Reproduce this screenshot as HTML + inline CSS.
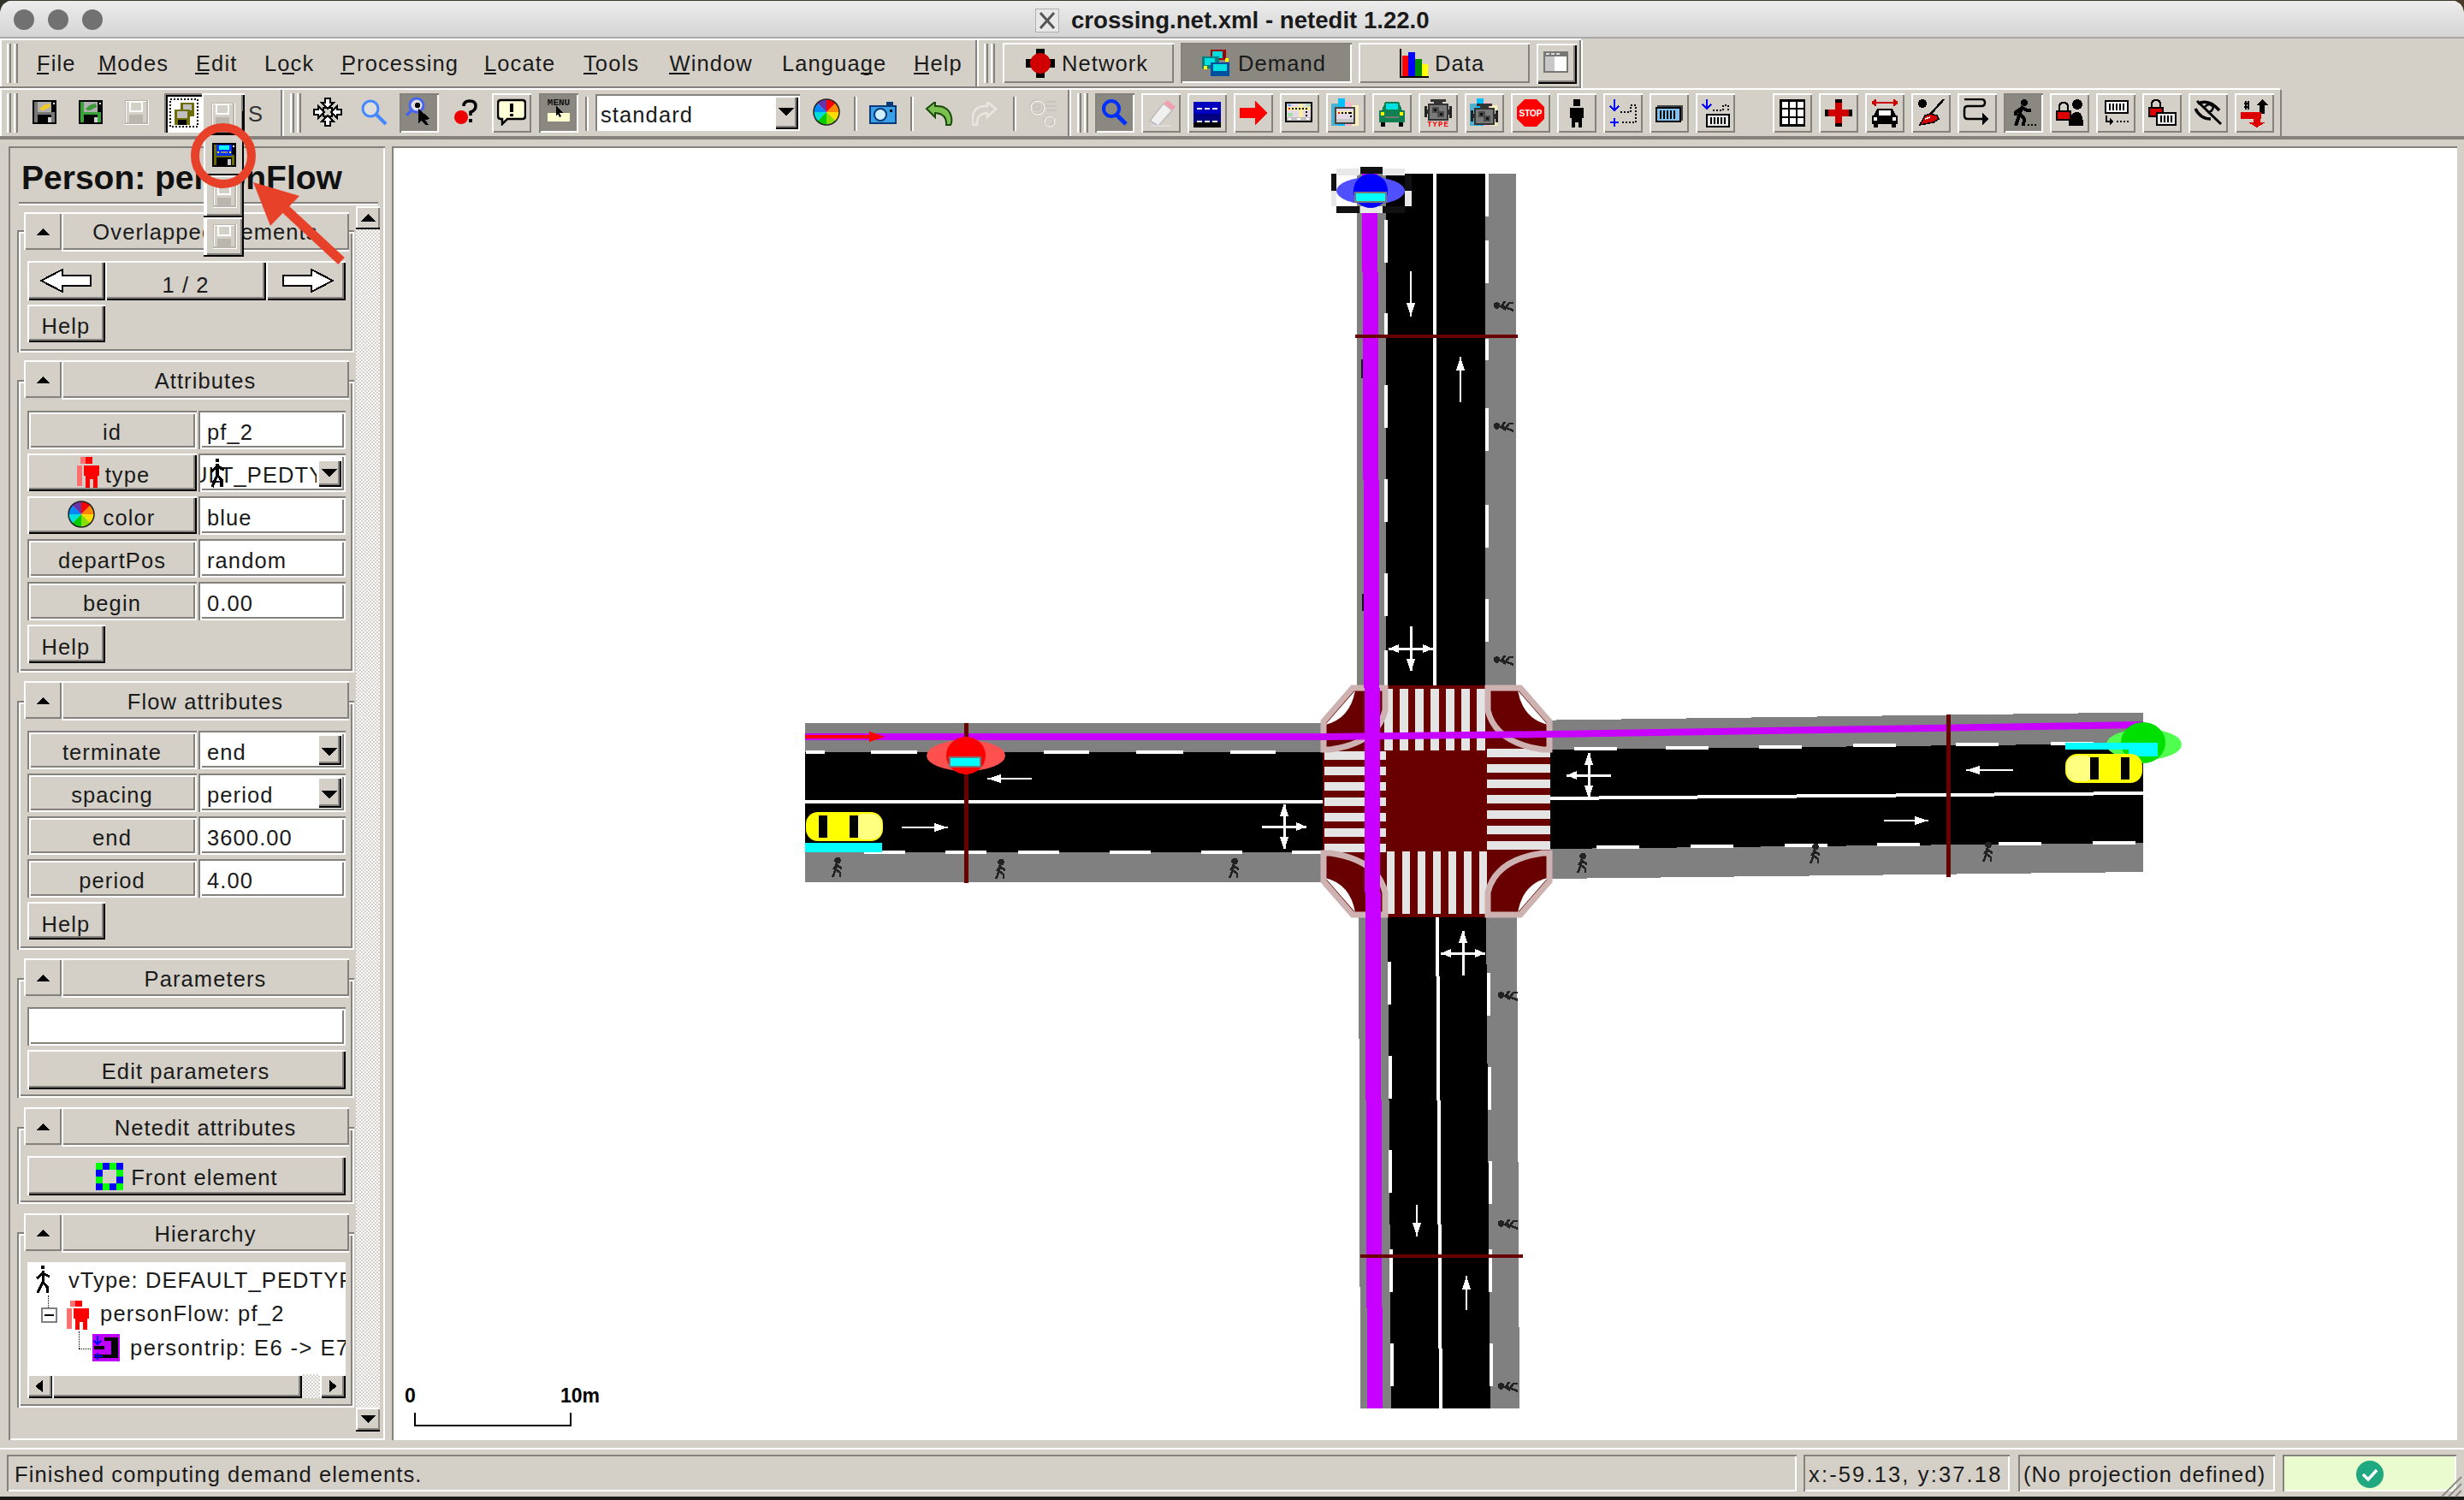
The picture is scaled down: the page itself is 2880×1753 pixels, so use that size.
<!DOCTYPE html><html><head><meta charset="utf-8"><style>
html,body{margin:0;padding:0;width:2880px;height:1753px;overflow:hidden;background:#d4d0c8;}
.a{position:absolute;box-sizing:border-box}
.t{position:absolute;white-space:pre;font-family:"Liberation Sans",sans-serif;line-height:normal}
</style></head><body>
<div class="a" style="left:0px;top:0px;width:2880px;height:44px;background:linear-gradient(#ededed,#d4d4d4)"></div>
<div class="a" style="left:0px;top:0px;width:2880px;height:1px;background:#3b3b33"></div>
<div class="a" style="left:0px;top:43px;width:2880px;height:2px;background:#a9a9a9"></div>
<div class="a" style="left:16px;top:11px;width:24px;height:24px;border-radius:50%;background:#717171"></div>
<div class="a" style="left:56px;top:11px;width:24px;height:24px;border-radius:50%;background:#717171"></div>
<div class="a" style="left:96px;top:11px;width:24px;height:24px;border-radius:50%;background:#717171"></div>
<div class="a" style="left:1210px;top:10px;width:28px;height:28px;background:#e8e8e8;border:1px solid #b0b0b0"></div>
<svg class="a" style="left:1210px;top:10px" width="28" height="28" viewBox="0 0 28 28" shape-rendering="crispEdges"><path d="M6 5 L22 23 M22 5 L6 23" stroke="#555" stroke-width="3" fill="none" shape-rendering="auto"/></svg>
<div class="t" style="left:1252px;top:8.1px;font-size:27.6px;font-weight:bold;color:#1a1a1a;letter-spacing:0px;">crossing.net.xml - netedit 1.22.0</div>
<svg class="a" style="left:0px;top:0px" width="16" height="16" viewBox="0 0 16 16" shape-rendering="crispEdges"><path d="M0 0 H14 Q2 2 0 14 Z" fill="#2f3328" shape-rendering="auto"/></svg>
<svg class="a" style="left:2864px;top:0px" width="16" height="16" viewBox="0 0 16 16" shape-rendering="crispEdges"><path d="M16 0 H2 Q14 2 16 14 Z" fill="#4a3a2a" shape-rendering="auto"/></svg>
<div class="a" style="left:0px;top:45px;width:1848px;height:2px;background:#fff"></div>
<div class="a" style="left:0px;top:101px;width:1848px;height:2px;background:#85827d"></div>
<div class="a" style="left:0px;top:103px;width:2880px;height:2px;background:#fff"></div>
<div class="a" style="left:0px;top:47px;width:2px;height:54px;background:#fff"></div>
<div class="a" style="left:8px;top:51px;width:5px;height:46px;border-left:2px solid #ffffff;border-right:2px solid #85827d;box-sizing:border-box"></div>
<div class="a" style="left:16px;top:51px;width:5px;height:46px;border-left:2px solid #ffffff;border-right:2px solid #85827d;box-sizing:border-box"></div>
<div class="t" style="left:43px;top:59.5px;font-size:25.5px;font-weight:normal;color:#1a1a1a;letter-spacing:1.1px;">File</div>
<div class="t" style="left:115px;top:59.5px;font-size:25.5px;font-weight:normal;color:#1a1a1a;letter-spacing:1.1px;">Modes</div>
<div class="t" style="left:229px;top:59.5px;font-size:25.5px;font-weight:normal;color:#1a1a1a;letter-spacing:1.1px;">Edit</div>
<div class="t" style="left:309px;top:59.5px;font-size:25.5px;font-weight:normal;color:#1a1a1a;letter-spacing:1.1px;">Lock</div>
<div class="t" style="left:399px;top:59.5px;font-size:25.5px;font-weight:normal;color:#1a1a1a;letter-spacing:1.1px;">Processing</div>
<div class="t" style="left:566px;top:59.5px;font-size:25.5px;font-weight:normal;color:#1a1a1a;letter-spacing:1.1px;">Locate</div>
<div class="t" style="left:682px;top:59.5px;font-size:25.5px;font-weight:normal;color:#1a1a1a;letter-spacing:1.1px;">Tools</div>
<div class="t" style="left:782.5px;top:59.5px;font-size:25.5px;font-weight:normal;color:#1a1a1a;letter-spacing:1.1px;">Window</div>
<div class="t" style="left:914px;top:59.5px;font-size:25.5px;font-weight:normal;color:#1a1a1a;letter-spacing:1.1px;">Language</div>
<div class="t" style="left:1068px;top:59.5px;font-size:25.5px;font-weight:normal;color:#1a1a1a;letter-spacing:1.1px;">Help</div>
<div class="a" style="left:43px;top:85px;width:14px;height:2px;background:#111"></div>
<div class="a" style="left:114px;top:85px;width:22px;height:2px;background:#111"></div>
<div class="a" style="left:228px;top:85px;width:16px;height:2px;background:#111"></div>
<div class="a" style="left:330px;top:85px;width:14px;height:2px;background:#111"></div>
<div class="a" style="left:398px;top:85px;width:16px;height:2px;background:#111"></div>
<div class="a" style="left:566px;top:85px;width:14px;height:2px;background:#111"></div>
<div class="a" style="left:682px;top:85px;width:16px;height:2px;background:#111"></div>
<div class="a" style="left:782px;top:85px;width:24px;height:2px;background:#111"></div>
<div class="a" style="left:1006px;top:85px;width:14px;height:2px;background:#111"></div>
<div class="a" style="left:1068px;top:85px;width:18px;height:2px;background:#111"></div>
<div class="a" style="left:1140px;top:47px;width:2px;height:54px;background:#85827d"></div>
<div class="a" style="left:1142px;top:47px;width:2px;height:54px;background:#fff"></div>
<div class="a" style="left:1150px;top:51px;width:5px;height:46px;border-left:2px solid #ffffff;border-right:2px solid #85827d;box-sizing:border-box"></div>
<div class="a" style="left:1158px;top:51px;width:5px;height:46px;border-left:2px solid #ffffff;border-right:2px solid #85827d;box-sizing:border-box"></div>
<div class="a" style="left:1172px;top:50px;width:200px;height:47px;background:#d4d0c8;box-shadow:inset 2px 2px 0 #ffffff,inset -2px -2px 0 #85827d"></div>
<div class="a" style="left:1380px;top:50px;width:200px;height:47px;background:#8b8881;box-shadow:inset 2px 2px 0 #85827d,inset -2px -2px 0 #ffffff"></div>
<div class="a" style="left:1588px;top:50px;width:200px;height:47px;background:#d4d0c8;box-shadow:inset 2px 2px 0 #ffffff,inset -2px -2px 0 #85827d"></div>
<div class="a" style="left:1796px;top:51px;width:47px;height:47px;background:#d4d0c8;box-shadow:inset 2px 2px 0 #ffffff,inset -2px -2px 0 #000000,inset -4px -4px 0 #85827d"></div>
<div class="a" style="left:1846px;top:47px;width:2px;height:56px;background:#85827d"></div>
<div class="a" style="left:1848px;top:47px;width:2px;height:56px;background:#fff"></div>
<div class="t" style="left:1241px;top:59.5px;font-size:25.5px;font-weight:normal;color:#1a1a1a;letter-spacing:1.1px;">Network</div>
<div class="t" style="left:1447px;top:59.5px;font-size:25.5px;font-weight:normal;color:#1a1a1a;letter-spacing:1.1px;">Demand</div>
<div class="t" style="left:1677px;top:59.5px;font-size:25.5px;font-weight:normal;color:#1a1a1a;letter-spacing:1.1px;">Data</div>
<svg class="a" style="left:1199px;top:57px" width="34" height="34" viewBox="0 0 34 34" shape-rendering="crispEdges"><rect x="12" y="0" width="10" height="34" fill="#000"/><rect x="0" y="12" width="34" height="10" fill="#000"/><circle cx="17" cy="17" r="12" fill="#d00000" shape-rendering="auto"/></svg>
<svg class="a" style="left:1405px;top:57px" width="34" height="34" viewBox="0 0 34 34" shape-rendering="crispEdges"><rect x="10" y="1" width="18" height="12" fill="#a00000"/><rect x="12" y="3" width="12" height="8" fill="#00dede"/><rect x="0" y="9" width="20" height="14" fill="#008080"/><rect x="3" y="11" width="12" height="8" fill="#00e0e0"/><rect x="10" y="16" width="22" height="16" fill="#0050a0"/><rect x="13" y="18" width="16" height="8" fill="#00e0e0"/><rect x="2" y="20" width="4" height="4" fill="#ff0"/><rect x="27" y="11" width="4" height="4" fill="#ff0"/></svg>
<svg class="a" style="left:1636px;top:57px" width="34" height="34" viewBox="0 0 34 34" shape-rendering="crispEdges"><rect x="0" y="0" width="2" height="34" fill="#000"/><rect x="0" y="32" width="34" height="2" fill="#000"/><rect x="3" y="8" width="7" height="24" fill="#f00"/><rect x="10" y="4" width="8" height="28" fill="#00f"/><rect x="18" y="12" width="8" height="20" fill="#080"/><rect x="26" y="18" width="7" height="14" fill="#ff0"/></svg>
<svg class="a" style="left:1804px;top:60px" width="29" height="25" viewBox="0 0 29 25" shape-rendering="crispEdges"><rect x="0" y="0" width="29" height="25" fill="#777"/><rect x="2" y="6" width="11" height="17" fill="#c8c8c8"/><rect x="13" y="6" width="14" height="17" fill="#fff"/><rect x="3" y="2" width="4" height="2" fill="#ddd"/><rect x="9" y="2" width="4" height="2" fill="#ddd"/><rect x="15" y="2" width="4" height="2" fill="#ddd"/></svg>
<div class="a" style="left:0px;top:159px;width:2880px;height:4px;background:#85827d"></div>
<div class="a" style="left:0px;top:105px;width:2px;height:54px;background:#fff"></div>
<div class="a" style="left:2665px;top:103px;width:215px;height:2px;background:#d4d0c8"></div>
<div class="a" style="left:8px;top:109px;width:5px;height:46px;border-left:2px solid #ffffff;border-right:2px solid #85827d;box-sizing:border-box"></div>
<div class="a" style="left:16px;top:109px;width:5px;height:46px;border-left:2px solid #ffffff;border-right:2px solid #85827d;box-sizing:border-box"></div>
<svg class="a" style="left:38px;top:117px" width="28" height="28" viewBox="0 0 28 28" shape-rendering="crispEdges"><rect x="0" y="0" width="28" height="28" fill="#000"/><rect x="2" y="2" width="4" height="24" fill="#777"/><rect x="22" y="14" width="4" height="12" fill="#777"/><rect x="6" y="2" width="16" height="12" fill="#b0b0b0"/><rect x="2" y="14" width="24" height="3" fill="#777"/><rect x="18" y="20" width="4" height="6" fill="#d0d0d0"/><rect x="24" y="3" width="2" height="2" fill="#fff"/><path d="M7 11 L12 6 L20 4 L21 8 L13 12 Z" fill="#f0c830"/></svg>
<svg class="a" style="left:92px;top:117px" width="28" height="28" viewBox="0 0 28 28" shape-rendering="crispEdges"><rect x="0" y="0" width="28" height="28" fill="#000"/><rect x="2" y="2" width="4" height="24" fill="#3aa03a"/><rect x="22" y="14" width="4" height="12" fill="#3aa03a"/><rect x="6" y="2" width="16" height="12" fill="#b0b0b0"/><rect x="2" y="14" width="24" height="3" fill="#3aa03a"/><rect x="18" y="20" width="4" height="6" fill="#d0d0d0"/><rect x="24" y="3" width="2" height="2" fill="#fff"/><path d="M7 11 L12 6 L20 4 L21 8 L13 12 Z" fill="#3a9a3a"/></svg>
<svg class="a" style="left:146px;top:117px" width="30" height="30" viewBox="0 0 30 30" shape-rendering="crispEdges"><rect x="1" y="1" width="26" height="27" fill="none" stroke="#fff" stroke-width="2"/><rect x="0" y="0" width="26" height="27" fill="none" stroke="#bab6ae" stroke-width="2"/><rect x="6" y="2" width="14" height="11" fill="none" stroke="#fff" stroke-width="2"/><rect x="5" y="17" width="16" height="9" fill="#bab6ae"/></svg>
<div class="a" style="left:192px;top:109px;width:44px;height:46px;background:#fff;box-shadow:inset 2px 2px 0 #85827d,inset 4px 4px 0 #000"></div>
<svg class="a" style="left:198px;top:115px" width="34" height="34" viewBox="0 0 34 34" shape-rendering="crispEdges"><rect x="1" y="1" width="32" height="32" fill="none" stroke="#000" stroke-width="2" stroke-dasharray="2 2"/><rect x="13" y="5" width="16" height="16" fill="#6e6e00"/><rect x="16" y="7" width="10" height="7" fill="#c0c0c0"/><rect x="6" y="13" width="18" height="18" fill="#6e6e00"/><rect x="9" y="15" width="12" height="8" fill="#c0c0c0"/><rect x="10" y="25" width="10" height="6" fill="#000"/></svg>
<div class="a" style="left:236px;top:109px;width:50px;height:46px;background:#d4d0c8;box-shadow:inset 2px 2px 0 #fff,inset -2px 0 0 #000,inset -4px -2px 0 #85827d"></div>
<svg class="a" style="left:247px;top:120px" width="30" height="30" viewBox="0 0 30 30" shape-rendering="crispEdges"><rect x="1" y="1" width="26" height="27" fill="none" stroke="#fff" stroke-width="2"/><rect x="0" y="0" width="26" height="27" fill="none" stroke="#bab6ae" stroke-width="2"/><rect x="6" y="2" width="14" height="11" fill="none" stroke="#fff" stroke-width="2"/><rect x="5" y="17" width="16" height="9" fill="#bab6ae"/></svg>
<div class="t" style="left:290px;top:119.0px;font-size:25.5px;font-weight:normal;color:#333;letter-spacing:1.1px;">S</div>
<div class="a" style="left:328px;top:105px;width:2px;height:54px;background:#85827d"></div>
<div class="a" style="left:330px;top:105px;width:2px;height:54px;background:#fff"></div>
<div class="a" style="left:339px;top:109px;width:5px;height:46px;border-left:2px solid #ffffff;border-right:2px solid #85827d;box-sizing:border-box"></div>
<div class="a" style="left:347px;top:109px;width:5px;height:46px;border-left:2px solid #ffffff;border-right:2px solid #85827d;box-sizing:border-box"></div>
<svg class="a" style="left:366px;top:114px" width="34" height="34" viewBox="0 0 34 34" shape-rendering="crispEdges"><rect x="12" y="12" width="10" height="10" fill="none" stroke="#000" stroke-width="2"/><g transform="rotate(0 17 17)"><path d="M14 1 H20 V6 H24 L17 13 L10 6 H14 Z" fill="#fff" stroke="#000" stroke-width="2.2" stroke-linejoin="miter"/></g><g transform="rotate(90 17 17)"><path d="M14 1 H20 V6 H24 L17 13 L10 6 H14 Z" fill="#fff" stroke="#000" stroke-width="2.2" stroke-linejoin="miter"/></g><g transform="rotate(180 17 17)"><path d="M14 1 H20 V6 H24 L17 13 L10 6 H14 Z" fill="#fff" stroke="#000" stroke-width="2.2" stroke-linejoin="miter"/></g><g transform="rotate(270 17 17)"><path d="M14 1 H20 V6 H24 L17 13 L10 6 H14 Z" fill="#fff" stroke="#000" stroke-width="2.2" stroke-linejoin="miter"/></g></svg>
<svg class="a" style="left:421px;top:115px" width="32" height="32" viewBox="0 0 32 32" shape-rendering="crispEdges"><circle cx="12" cy="12" r="9" fill="#ddd" stroke="#4488ff" stroke-width="3" shape-rendering="auto"/><path d="M18 18 L30 30" stroke="#4488ff" stroke-width="4" shape-rendering="auto"/></svg>
<div class="a" style="left:467px;top:109px;width:46px;height:46px;background:#8b8881;box-shadow:inset 2px 2px 0 #85827d,inset -2px -2px 0 #ffffff"></div>
<svg class="a" style="left:473px;top:113px" width="34" height="34" viewBox="0 0 34 34" shape-rendering="crispEdges"><circle cx="14" cy="10" r="8" fill="#ddd" stroke="#4466ee" stroke-width="3" shape-rendering="auto"/><circle cx="15" cy="10" r="3" fill="#000"/><path d="M8 16 L2 22" stroke="#4466ee" stroke-width="3"/><path d="M16 14 L30 26 L24 27 L28 33 L24 33 L20 28 L16 31 Z" fill="#000"/></svg>
<svg class="a" style="left:530px;top:116px" width="30" height="30" viewBox="0 0 30 30" shape-rendering="crispEdges"><circle cx="9" cy="21" r="8" fill="#e00" shape-rendering="auto"/><path d="M12 8 Q12 2 19 2 Q26 2 26 8 Q26 13 20 15 V19" stroke="#000" stroke-width="3.5" fill="none" shape-rendering="auto"/><rect x="18" y="23" width="4" height="4" fill="#000"/></svg>
<div class="a" style="left:575px;top:109px;width:46px;height:46px;background:#d4d0c8;box-shadow:inset 2px 2px 0 #ffffff,inset -2px -2px 0 #85827d"></div>
<svg class="a" style="left:581px;top:115px" width="34" height="32" viewBox="0 0 34 32" shape-rendering="crispEdges"><path d="M4 2 H30 Q33 2 33 6 V20 Q33 24 30 24 H12 L6 30 V24 H4 Q1 24 1 20 V6 Q1 2 4 2 Z" fill="#ffffd8" stroke="#000" stroke-width="2.5" shape-rendering="auto"/><rect x="15" y="6" width="4" height="10" fill="#000"/><rect x="15" y="18" width="4" height="3" fill="#000"/></svg>
<div class="a" style="left:630px;top:109px;width:46px;height:46px;background:#8b8881;box-shadow:inset 2px 2px 0 #85827d,inset -2px -2px 0 #ffffff"></div>
<svg class="a" style="left:636px;top:112px" width="34" height="36" viewBox="0 0 34 36" shape-rendering="crispEdges"><text x="17" y="11" font-family="Liberation Mono" font-size="11" font-weight="bold" text-anchor="middle" fill="#111">MENU</text><rect x="4" y="20" width="26" height="10" fill="#ffffd0"/><path d="M14 12 L22 20 L18 20 L20 24 L18 25 L16 21 L14 23 Z" fill="#000"/></svg>
<div class="a" style="left:684px;top:113px;width:2px;height:40px;background:#85827d"></div>
<div class="a" style="left:686px;top:113px;width:2px;height:40px;background:#fff"></div>
<div class="a" style="left:696px;top:110px;width:239px;height:43px;background:#fff;box-shadow:inset 2px 2px 0 #85827d,inset -2px -2px 0 #fff"></div>
<div class="t" style="left:702px;top:119.5px;font-size:25.5px;font-weight:normal;color:#1a1a1a;letter-spacing:1.1px;">standard</div>
<div class="a" style="left:905px;top:112px;width:28px;height:39px;background:#d4d0c8;box-shadow:inset 2px 2px 0 #ffffff,inset -2px -2px 0 #000000,inset -4px -4px 0 #85827d"></div>
<svg class="a" style="left:910px;top:126px" width="18" height="10" viewBox="0 0 18 10" shape-rendering="crispEdges"><path d="M0 0 H18 L9 10 Z" fill="#000"/></svg>
<svg class="a" style="left:950px;top:115px" width="32" height="32" viewBox="0 0 32 32" shape-rendering="crispEdges"><g shape-rendering="auto" transform="translate(16 16)"><path d="M0 0 L0 -15 A15 15 0 0 1 10.6 -10.6 Z" fill="#f00"/><path d="M0 0 L10.6 -10.6 A15 15 0 0 1 15 0 Z" fill="#f80"/><path d="M0 0 L15 0 A15 15 0 0 1 10.6 10.6 Z" fill="#fd0"/><path d="M0 0 L10.6 10.6 A15 15 0 0 1 0 15 Z" fill="#8d0"/><path d="M0 0 L0 15 A15 15 0 0 1 -10.6 10.6 Z" fill="#0c0"/><path d="M0 0 L-10.6 10.6 A15 15 0 0 1 -15 0 Z" fill="#0dd"/><path d="M0 0 L-15 0 A15 15 0 0 1 -10.6 -10.6 Z" fill="#08f"/><path d="M0 0 L-10.6 -10.6 A15 15 0 0 1 0 -15 Z" fill="#63a"/><circle r="15" fill="none" stroke="#222" stroke-width="1.5"/></g></svg>
<div class="a" style="left:998px;top:113px;width:2px;height:40px;background:#85827d"></div>
<div class="a" style="left:1000px;top:113px;width:2px;height:40px;background:#fff"></div>
<svg class="a" style="left:1016px;top:119px" width="32" height="26" viewBox="0 0 32 26" shape-rendering="crispEdges"><rect x="0" y="4" width="32" height="22" fill="#0a3a7a"/><rect x="2" y="6" width="28" height="18" fill="#3aa0e8"/><rect x="20" y="0" width="8" height="5" fill="#0a3a7a"/><circle cx="13" cy="15" r="7" fill="#cfefff" stroke="#0a3a7a" stroke-width="2" shape-rendering="auto"/><rect x="24" y="9" width="3" height="3" fill="#000"/></svg>
<div class="a" style="left:1064px;top:113px;width:2px;height:40px;background:#85827d"></div>
<div class="a" style="left:1066px;top:113px;width:2px;height:40px;background:#fff"></div>
<svg class="a" style="left:1081px;top:119px" width="34" height="28" viewBox="0 0 34 28" shape-rendering="crispEdges"><path d="M2 8 L12 0 V5 Q28 4 31 18 Q32 24 30 27 L25 27 Q26 14 12 13 V18 Z" fill="#7cc050" stroke="#1a4a10" stroke-width="2" shape-rendering="auto"/></svg>
<svg class="a" style="left:1136px;top:119px" width="30" height="28" viewBox="0 0 30 28" shape-rendering="crispEdges"><path d="M28 8 L18 0 V5 Q2 4 1 18 Q0 24 2 27 L6 27 Q5 14 18 13 V18 Z" fill="none" stroke="#e8e6e0" stroke-width="2.5" shape-rendering="auto"/></svg>
<div class="a" style="left:1184px;top:113px;width:2px;height:40px;background:#85827d"></div>
<div class="a" style="left:1186px;top:113px;width:2px;height:40px;background:#fff"></div>
<svg class="a" style="left:1202px;top:115px" width="34" height="34" viewBox="0 0 34 34" shape-rendering="crispEdges"><g fill="none" stroke="#c8c4bc" stroke-width="2" shape-rendering="auto"><circle cx="10" cy="10" r="8"/><circle cx="10" cy="10" r="3"/><circle cx="24" cy="26" r="6"/><path d="M20 4 H33 M20 9 H33 M22 14 H33"/></g><g fill="none" stroke="#fff" stroke-width="1" shape-rendering="auto"><circle cx="11" cy="11" r="8"/><circle cx="25" cy="27" r="6"/></g></svg>
<div class="a" style="left:1248px;top:105px;width:2px;height:54px;background:#85827d"></div>
<div class="a" style="left:1250px;top:105px;width:2px;height:54px;background:#fff"></div>
<div class="a" style="left:1259px;top:109px;width:5px;height:46px;border-left:2px solid #ffffff;border-right:2px solid #85827d;box-sizing:border-box"></div>
<div class="a" style="left:1267px;top:109px;width:5px;height:46px;border-left:2px solid #ffffff;border-right:2px solid #85827d;box-sizing:border-box"></div>
<div class="a" style="left:1280px;top:109px;width:46px;height:46px;background:#8b8881;box-shadow:inset 2px 2px 0 #85827d,inset -2px -2px 0 #ffffff"></div>
<svg class="a" style="left:1286px;top:115px" width="34" height="34" viewBox="0 0 34 34" shape-rendering="crispEdges"><circle cx="13" cy="12" r="9" fill="none" stroke="#0030ff" stroke-width="4" shape-rendering="auto"/><path d="M19 19 L30 30" stroke="#0030ff" stroke-width="5" shape-rendering="auto"/></svg>
<div class="a" style="left:1334px;top:109px;width:46px;height:46px;background:#d4d0c8;box-shadow:inset 2px 2px 0 #ffffff,inset -2px -2px 0 #85827d"></div>
<svg class="a" style="left:1340px;top:115px" width="34" height="34" viewBox="0 0 34 34" shape-rendering="crispEdges"><path d="M4 26 L20 6 L30 14 L14 32 Z" fill="#f0f0f0" stroke="#bbb" stroke-width="1.5" shape-rendering="auto"/><path d="M20 6 L25 2 L34 10 L30 14 Z" fill="#f0a0b0" shape-rendering="auto"/><path d="M6 32 H28" stroke="#ddd" stroke-width="2"/></svg>
<div class="a" style="left:1388px;top:109px;width:46px;height:46px;background:#d4d0c8;box-shadow:inset 2px 2px 0 #ffffff,inset -2px -2px 0 #85827d"></div>
<svg class="a" style="left:1394px;top:115px" width="34" height="34" viewBox="0 0 34 34" shape-rendering="crispEdges"><rect x="1" y="4" width="32" height="14" fill="#0000c0"/><rect x="1" y="18" width="32" height="10" fill="#000080"/><rect x="1" y="28" width="32" height="6" fill="#000"/><rect x="5" y="11" width="6" height="2" fill="#fff"/><rect x="14" y="11" width="6" height="2" fill="#fff"/><rect x="23" y="11" width="6" height="2" fill="#fff"/><rect x="5" y="26" width="6" height="2" fill="#fff"/><rect x="14" y="26" width="6" height="2" fill="#fff"/><rect x="23" y="26" width="6" height="2" fill="#fff"/></svg>
<div class="a" style="left:1442px;top:109px;width:46px;height:46px;background:#d4d0c8;box-shadow:inset 2px 2px 0 #ffffff,inset -2px -2px 0 #85827d"></div>
<svg class="a" style="left:1448px;top:115px" width="34" height="34" viewBox="0 0 34 34" shape-rendering="crispEdges"><path d="M1 11 H19 V2 L33 17 L19 32 V23 H1 Z" fill="#f00"/></svg>
<div class="a" style="left:1496px;top:109px;width:46px;height:46px;background:#d4d0c8;box-shadow:inset 2px 2px 0 #ffffff,inset -2px -2px 0 #85827d"></div>
<svg class="a" style="left:1502px;top:115px" width="34" height="34" viewBox="0 0 34 34" shape-rendering="crispEdges"><rect x="0" y="4" width="32" height="24" fill="#000"/><rect x="2" y="6" width="28" height="20" fill="#e6d8e6"/><rect x="16" y="6" width="5" height="20" fill="#f8f0a0"/><rect x="2" y="10" width="28" height="4" fill="#f8f0a0"/><rect x="3" y="7" width="4" height="2" fill="#60a0f0"/><rect x="25" y="7" width="5" height="2" fill="#a0e0a0"/><rect x="3" y="17" width="6" height="4" fill="#a0e0a0"/><rect x="2" y="22" width="28" height="4" fill="#c0c0c0"/><rect x="4" y="23" width="3" height="2" fill="#fff"/><rect x="14" y="23" width="4" height="2" fill="#fff"/><rect x="25" y="23" width="3" height="2" fill="#fff"/><rect x="4" y="11" width="2" height="2" fill="#f00"/><rect x="8" y="11" width="2" height="2" fill="#000"/><rect x="12" y="11" width="2" height="2" fill="#000"/><rect x="16" y="11" width="2" height="2" fill="#000"/><rect x="20" y="11" width="2" height="2" fill="#000"/><rect x="24" y="11" width="2" height="2" fill="#000"/><rect x="24" y="15" width="2" height="2" fill="#000"/><rect x="24" y="19" width="2" height="2" fill="#000"/></svg>
<div class="a" style="left:1550px;top:109px;width:46px;height:46px;background:#d4d0c8;box-shadow:inset 2px 2px 0 #ffffff,inset -2px -2px 0 #85827d"></div>
<svg class="a" style="left:1556px;top:115px" width="34" height="34" viewBox="0 0 34 34" shape-rendering="crispEdges"><rect x="8" y="0" width="8" height="12" fill="#00c0ff"/><rect x="0" y="6" width="8" height="26" fill="#50b0d0"/><rect x="16" y="4" width="8" height="28" fill="#ffb8c8"/><rect x="24" y="8" width="8" height="24" fill="#f8f0c0"/><rect x="8" y="12" width="8" height="20" fill="#00c0ff"/><rect x="4" y="10" width="24" height="20" fill="#444"/><rect x="6" y="12" width="20" height="16" fill="#e6d8e6"/><rect x="6" y="15" width="20" height="3" fill="#f8f0a0"/><rect x="6" y="24" width="20" height="4" fill="#c8c8c8"/><rect x="8" y="16" width="2" height="2" fill="#f00"/><rect x="12" y="16" width="2" height="2" fill="#000"/><rect x="16" y="16" width="2" height="2" fill="#000"/><rect x="20" y="16" width="4" height="2" fill="#000"/><rect x="22" y="20" width="2" height="2" fill="#000"/></svg>
<div class="a" style="left:1604px;top:109px;width:46px;height:46px;background:#d4d0c8;box-shadow:inset 2px 2px 0 #ffffff,inset -2px -2px 0 #85827d"></div>
<svg class="a" style="left:1610px;top:115px" width="34" height="34" viewBox="0 0 34 34" shape-rendering="crispEdges"><path d="M5 14 L9 4 H25 L29 14 H32 V28 H2 V14 Z" fill="#108050"/><rect x="10" y="6" width="14" height="7" fill="#00e0e0"/><rect x="4" y="16" width="4" height="4" fill="#ff0"/><rect x="26" y="16" width="4" height="4" fill="#ff0"/><rect x="9" y="21" width="16" height="2" fill="#777"/><rect x="4" y="28" width="5" height="5" fill="#000"/><rect x="25" y="28" width="5" height="5" fill="#000"/></svg>
<div class="a" style="left:1658px;top:109px;width:46px;height:46px;background:#d4d0c8;box-shadow:inset 2px 2px 0 #ffffff,inset -2px -2px 0 #85827d"></div>
<svg class="a" style="left:1664px;top:115px" width="34" height="34" viewBox="0 0 34 34" shape-rendering="crispEdges"><g transform="translate(1 1)"><rect x="7" y="0" width="18" height="3" fill="#333"/><rect x="11" y="3" width="10" height="3" fill="#333"/><rect x="5" y="6" width="22" height="18" fill="#7a7a7a" stroke="#333" stroke-width="2"/><rect x="0" y="8" width="3" height="13" fill="#222"/><rect x="3" y="12" width="3" height="5" fill="#333"/><rect x="29" y="8" width="3" height="14" fill="#222"/><rect x="26" y="12" width="3" height="6" fill="#333"/><rect x="9" y="9" width="8" height="7" fill="#4a4a4a"/><rect x="15" y="14" width="8" height="7" fill="#4a4a4a"/><rect x="11" y="11" width="3" height="3" fill="#111"/><rect x="18" y="16" width="3" height="3" fill="#111"/></g><text x="17" y="33" font-family="Liberation Mono" font-size="9" font-weight="bold" text-anchor="middle" fill="#e00" letter-spacing="1">TYPE</text></svg>
<div class="a" style="left:1712px;top:109px;width:46px;height:46px;background:#d4d0c8;box-shadow:inset 2px 2px 0 #ffffff,inset -2px -2px 0 #85827d"></div>
<svg class="a" style="left:1718px;top:115px" width="34" height="34" viewBox="0 0 34 34" shape-rendering="crispEdges"><rect x="8" y="0" width="8" height="32" fill="#00c0ff"/><rect x="0" y="6" width="8" height="26" fill="#50b0d0"/><rect x="16" y="4" width="8" height="28" fill="#ffb8c8"/><rect x="24" y="8" width="8" height="24" fill="#f8f0c0"/><g transform="translate(1 6)"><rect x="7" y="0" width="18" height="3" fill="#333"/><rect x="11" y="3" width="10" height="3" fill="#333"/><rect x="5" y="6" width="22" height="18" fill="#7a7a7a" stroke="#333" stroke-width="2"/><rect x="0" y="8" width="3" height="13" fill="#222"/><rect x="3" y="12" width="3" height="5" fill="#333"/><rect x="29" y="8" width="3" height="14" fill="#222"/><rect x="26" y="12" width="3" height="6" fill="#333"/><rect x="9" y="9" width="8" height="7" fill="#4a4a4a"/><rect x="15" y="14" width="8" height="7" fill="#4a4a4a"/><rect x="11" y="11" width="3" height="3" fill="#111"/><rect x="18" y="16" width="3" height="3" fill="#111"/></g></svg>
<div class="a" style="left:1766px;top:109px;width:46px;height:46px;background:#d4d0c8;box-shadow:inset 2px 2px 0 #ffffff,inset -2px -2px 0 #85827d"></div>
<svg class="a" style="left:1772px;top:115px" width="34" height="34" viewBox="0 0 34 34" shape-rendering="crispEdges"><path d="M10 1 H24 L33 10 V24 L24 33 H10 L1 24 V10 Z" fill="#f00" shape-rendering="auto"/><text x="17" y="21" font-family="Liberation Sans" font-size="10" font-weight="bold" text-anchor="middle" fill="#fff">STOP</text></svg>
<div class="a" style="left:1820px;top:109px;width:46px;height:46px;background:#d4d0c8;box-shadow:inset 2px 2px 0 #ffffff,inset -2px -2px 0 #85827d"></div>
<svg class="a" style="left:1826px;top:115px" width="34" height="34" viewBox="0 0 34 34" shape-rendering="crispEdges"><rect x="13" y="1" width="8" height="8" fill="#000"/><rect x="9" y="11" width="16" height="12" fill="#000"/><rect x="11" y="23" width="12" height="5" fill="#000"/><rect x="11" y="28" width="4" height="6" fill="#000"/><rect x="19" y="28" width="4" height="6" fill="#000"/></svg>
<div class="a" style="left:1874px;top:109px;width:46px;height:46px;background:#d4d0c8;box-shadow:inset 2px 2px 0 #ffffff,inset -2px -2px 0 #85827d"></div>
<svg class="a" style="left:1880px;top:115px" width="34" height="34" viewBox="0 0 34 34" shape-rendering="crispEdges"><path d="M7 1 V14 M2 9 L7 14 L12 9" stroke="#00f" stroke-width="2.5" fill="none"/><path d="M2 28 L12 28 M7 23 V33" stroke="#00f" stroke-width="2.5"/><path d="M14 16 H26 V8 H32 V28 H14" stroke="#000" stroke-width="2" stroke-dasharray="2 2" fill="none"/></svg>
<div class="a" style="left:1928px;top:109px;width:46px;height:46px;background:#d4d0c8;box-shadow:inset 2px 2px 0 #ffffff,inset -2px -2px 0 #85827d"></div>
<svg class="a" style="left:1934px;top:115px" width="34" height="34" viewBox="0 0 34 34" shape-rendering="crispEdges"><rect x="3" y="8" width="30" height="18" fill="#444"/><rect x="1" y="10" width="30" height="18" fill="#000"/><rect x="3" y="12" width="26" height="14" fill="#80c0f0"/><path d="M7 14 V24 M11 14 V24 M15 14 V24 M19 14 V24 M23 14 V24" stroke="#000" stroke-width="2"/></svg>
<div class="a" style="left:1982px;top:109px;width:46px;height:46px;background:#d4d0c8;box-shadow:inset 2px 2px 0 #ffffff,inset -2px -2px 0 #85827d"></div>
<svg class="a" style="left:1988px;top:115px" width="34" height="34" viewBox="0 0 34 34" shape-rendering="crispEdges"><path d="M7 1 V12 M2 7 L7 12 L12 7" stroke="#00f" stroke-width="2.5" fill="none"/><path d="M14 14 H26 V8 H32 V14" stroke="#000" stroke-width="2" stroke-dasharray="2 2" fill="none"/><rect x="6" y="18" width="28" height="16" fill="#000"/><rect x="8" y="20" width="24" height="12" fill="#e8e8e8"/><path d="M12 22 V30 M16 22 V30 M20 22 V30 M24 22 V30 M28 22 V30" stroke="#000" stroke-width="2"/></svg>
<div class="a" style="left:2072px;top:109px;width:46px;height:46px;background:#d4d0c8;box-shadow:inset 2px 2px 0 #ffffff,inset -2px -2px 0 #85827d"></div>
<svg class="a" style="left:2078px;top:115px" width="34" height="34" viewBox="0 0 34 34" shape-rendering="crispEdges"><rect x="2" y="1" width="30" height="32" fill="#000"/><rect x="5" y="4" width="7" height="7" fill="#fff"/><rect x="14" y="4" width="7" height="7" fill="#fff"/><rect x="23" y="4" width="7" height="7" fill="#fff"/><rect x="5" y="13" width="7" height="8" fill="#fff"/><rect x="14" y="13" width="7" height="8" fill="#fff"/><rect x="23" y="13" width="7" height="8" fill="#fff"/><rect x="5" y="23" width="7" height="7" fill="#fff"/><rect x="14" y="23" width="7" height="7" fill="#fff"/><rect x="23" y="23" width="7" height="7" fill="#fff"/></svg>
<div class="a" style="left:2126px;top:109px;width:46px;height:46px;background:#d4d0c8;box-shadow:inset 2px 2px 0 #ffffff,inset -2px -2px 0 #85827d"></div>
<svg class="a" style="left:2132px;top:115px" width="34" height="34" viewBox="0 0 34 34" shape-rendering="crispEdges"><rect x="13" y="1" width="8" height="32" fill="#000"/><rect x="1" y="13" width="32" height="8" fill="#000"/><path d="M13 5 H21 V13 H29 V21 H21 V29 H13 V21 H5 V13 H13 Z" fill="#d00000"/></svg>
<div class="a" style="left:2180px;top:109px;width:46px;height:46px;background:#d4d0c8;box-shadow:inset 2px 2px 0 #ffffff,inset -2px -2px 0 #85827d"></div>
<svg class="a" style="left:2186px;top:115px" width="34" height="34" viewBox="0 0 34 34" shape-rendering="crispEdges"><path d="M2 5 H32 M2 5 L7 2 M2 5 L7 8 M32 5 L27 2 M32 5 L27 8" stroke="#c00" stroke-width="2.5" fill="none"/><path d="M4 20 L8 12 H26 L30 20 H32 V30 H2 V20 Z" fill="#000"/><rect x="10" y="14" width="14" height="6" fill="#fff"/><rect x="4" y="22" width="4" height="4" fill="#fff"/><rect x="26" y="22" width="4" height="4" fill="#fff"/><rect x="4" y="30" width="5" height="4" fill="#000"/><rect x="25" y="30" width="5" height="4" fill="#000"/></svg>
<div class="a" style="left:2234px;top:109px;width:46px;height:46px;background:#d4d0c8;box-shadow:inset 2px 2px 0 #ffffff,inset -2px -2px 0 #85827d"></div>
<svg class="a" style="left:2240px;top:115px" width="34" height="34" viewBox="0 0 34 34" shape-rendering="crispEdges"><circle cx="7" cy="6" r="5" fill="#000"/><path d="M32 1 L6 30" stroke="#000" stroke-width="2.5"/><path d="M4 31 L10 20 L16 18 L24 20 L26 24 L20 28 Z" fill="#d00000" stroke="#000" stroke-width="1.5"/><path d="M10 24 L16 22" stroke="#fff" stroke-width="1.5"/></svg>
<div class="a" style="left:2288px;top:109px;width:46px;height:46px;background:#d4d0c8;box-shadow:inset 2px 2px 0 #ffffff,inset -2px -2px 0 #85827d"></div>
<svg class="a" style="left:2294px;top:115px" width="34" height="34" viewBox="0 0 34 34" shape-rendering="crispEdges"><path d="M2 1 H22 Q26 1 26 5 Q26 9 22 9 H6 Q2 9 2 13 V20 Q2 24 6 24 H24" stroke="#000" stroke-width="2.5" fill="none" shape-rendering="auto"/><path d="M23 17 L31 24 L23 31 Z" fill="#000"/></svg>
<div class="a" style="left:2342px;top:109px;width:46px;height:46px;background:#8b8881;box-shadow:inset 2px 2px 0 #85827d,inset -2px -2px 0 #ffffff"></div>
<svg class="a" style="left:2348px;top:115px" width="34" height="34" viewBox="0 0 34 34" shape-rendering="crispEdges"><circle cx="18" cy="5" r="4" fill="#000"/><path d="M16 9 L12 20 L8 32 M13 18 L18 24 L17 32 M15 11 L22 14 L26 14 M14 12 L8 16 V20" stroke="#000" stroke-width="4" fill="none"/><path d="M22 31 H24 M26 31 H28 M30 31 H32" stroke="#000" stroke-width="2"/></svg>
<div class="a" style="left:2396px;top:109px;width:46px;height:46px;background:#d4d0c8;box-shadow:inset 2px 2px 0 #ffffff,inset -2px -2px 0 #85827d"></div>
<svg class="a" style="left:2402px;top:115px" width="34" height="34" viewBox="0 0 34 34" shape-rendering="crispEdges"><circle cx="26" cy="7" r="6" fill="#000"/><path d="M16 32 Q16 16 26 16 Q33 16 33 32 Z" fill="#000"/><path d="M5 14 V10 Q5 5 10 5 Q15 5 15 10 V14" stroke="#000" stroke-width="2.5" fill="none"/><rect x="1" y="14" width="18" height="12" fill="#000"/><rect x="3" y="16" width="14" height="8" fill="#d00"/></svg>
<div class="a" style="left:2450px;top:109px;width:46px;height:46px;background:#d4d0c8;box-shadow:inset 2px 2px 0 #ffffff,inset -2px -2px 0 #85827d"></div>
<svg class="a" style="left:2456px;top:115px" width="34" height="34" viewBox="0 0 34 34" shape-rendering="crispEdges"><rect x="4" y="2" width="28" height="16" fill="#000"/><rect x="6" y="4" width="24" height="12" fill="#fff"/><path d="M10 6 V14 M14 6 V14 M18 6 V14 M22 6 V14 M26 6 V14" stroke="#000" stroke-width="2"/><path d="M6 20 V27 H12" stroke="#000" stroke-width="2.5" fill="none"/><path d="M10 23 L15 27 L10 31 Z" fill="#000"/><path d="M18 27 H20 M22 27 H24 M26 27 H28 M30 27 H32" stroke="#000" stroke-width="2"/></svg>
<div class="a" style="left:2504px;top:109px;width:46px;height:46px;background:#d4d0c8;box-shadow:inset 2px 2px 0 #ffffff,inset -2px -2px 0 #85827d"></div>
<svg class="a" style="left:2510px;top:115px" width="34" height="34" viewBox="0 0 34 34" shape-rendering="crispEdges"><path d="M5 10 V7 Q5 2 10 2 Q15 2 15 7 V10" stroke="#000" stroke-width="2.5" fill="none"/><rect x="1" y="10" width="18" height="12" fill="#000"/><rect x="3" y="12" width="14" height="8" fill="#d00"/><rect x="10" y="16" width="24" height="16" fill="#000"/><rect x="12" y="18" width="20" height="12" fill="#e8e8e8"/><path d="M16 20 V28 M20 20 V28 M24 20 V28 M28 20 V28" stroke="#000" stroke-width="2"/></svg>
<div class="a" style="left:2558px;top:109px;width:46px;height:46px;background:#d4d0c8;box-shadow:inset 2px 2px 0 #ffffff,inset -2px -2px 0 #85827d"></div>
<svg class="a" style="left:2564px;top:115px" width="34" height="34" viewBox="0 0 34 34" shape-rendering="crispEdges"><path d="M5 6 Q18 0 30 14" stroke="#000" stroke-width="3.5" fill="none" shape-rendering="auto"/><path d="M2 12 Q8 24 20 24" stroke="#000" stroke-width="3.5" fill="none" shape-rendering="auto"/><path d="M4 3 L32 30" stroke="#000" stroke-width="3" shape-rendering="auto"/><path d="M13 10 Q18 4 23 10 Q22 16 16 16" stroke="#000" stroke-width="2.5" fill="none" shape-rendering="auto"/></svg>
<div class="a" style="left:2612px;top:109px;width:46px;height:46px;background:#d4d0c8;box-shadow:inset 2px 2px 0 #ffffff,inset -2px -2px 0 #85827d"></div>
<svg class="a" style="left:2618px;top:115px" width="34" height="34" viewBox="0 0 34 34" shape-rendering="crispEdges"><path d="M5 6 H11 M5 10 H11 M7 3 V13 M10 3 V13" stroke="#000" stroke-width="1.5"/><path d="M26 1 L33 8 H29 V18 H23 V8 H19 Z" fill="#000"/><rect x="1" y="16" width="24" height="8" fill="#d00"/><path d="M16 22 H24 V28 H30 L20 34 L10 28 H16 Z" fill="#d00"/></svg>
<div class="a" style="left:2665px;top:105px;width:2px;height:54px;background:#85827d"></div>
<div class="a" style="left:10px;top:171px;width:440px;height:1512px;background:#d4d0c8;box-shadow:inset 2px 2px 0 #85827d,inset -2px -2px 0 #ffffff"></div>
<div class="t" style="left:25px;top:186.1px;font-size:39px;font-weight:bold;color:#111;letter-spacing:0px;">Person: personFlow</div>
<div class="a" style="left:22px;top:236px;width:420px;height:2px;background:#85827d"></div>
<div class="a" style="left:22px;top:238px;width:420px;height:2px;background:#fff"></div>
<div class="a" style="left:416px;top:268px;width:28px;height:1377px;background-color:#fff;background-image:linear-gradient(45deg,#d4d0c8 25%,transparent 25%,transparent 75%,#d4d0c8 75%),linear-gradient(45deg,#d4d0c8 25%,transparent 25%,transparent 75%,#d4d0c8 75%);background-size:4px 4px;background-position:0 0,2px 2px"></div>
<div class="a" style="left:416px;top:241px;width:28px;height:27px;background:#d4d0c8;box-shadow:inset 2px 2px 0 #ffffff,inset -2px -2px 0 #85827d"></div>
<div class="a" style="left:416px;top:266px;width:28px;height:2px;background:#000"></div>
<svg class="a" style="left:421px;top:250px" width="18" height="9" viewBox="0 0 18 9" shape-rendering="crispEdges"><path d="M9 0 L18 9 H0 Z" fill="#000"/></svg>
<div class="a" style="left:416px;top:1645px;width:28px;height:26px;background:#d4d0c8;box-shadow:inset 2px 2px 0 #ffffff,inset -2px -2px 0 #85827d"></div>
<div class="a" style="left:416px;top:1671px;width:28px;height:2px;background:#000"></div>
<svg class="a" style="left:421px;top:1654px" width="18" height="9" viewBox="0 0 18 9" shape-rendering="crispEdges"><path d="M0 0 H18 L9 9 Z" fill="#000"/></svg>
<div class="a" style="left:20px;top:269px;width:394px;height:143px;background:#d4d0c8;box-shadow:inset 2px 2px 0 #85827d,inset -2px -2px 0 #ffffff,inset 4px 4px 0 #ffffff,inset -4px -4px 0 #85827d"></div>
<div class="a" style="left:28px;top:247.5px;width:44px;height:44px;background:#d4d0c8;box-shadow:inset 2px 2px 0 #ffffff,inset -2px -2px 0 #85827d"></div>
<svg class="a" style="left:41px;top:266.5px" width="18" height="8" viewBox="0 0 18 8" shape-rendering="crispEdges"><path d="M9 0 L17 8 H1 Z" fill="#000"/></svg>
<div class="a" style="left:72px;top:247.5px;width:336px;height:44px;background:#d4d0c8;box-shadow:inset 2px 2px 0 #ffffff,inset -2px -2px 0 #85827d"></div>
<div class="a" style="left:72px;top:291.5px;width:336px;height:2px;background:#fff"></div>
<div class="t" style="left:-360px;width:1200px;text-align:center;top:257.0px;font-size:25.5px;font-weight:normal;color:#1a1a1a;letter-spacing:1.1px;">Overlapped elements</div>
<div class="a" style="left:32px;top:305px;width:91px;height:46px;background:#d4d0c8;box-shadow:inset 2px 2px 0 #ffffff,inset -2px -2px 0 #000000,inset -4px -4px 0 #85827d"></div>
<div class="a" style="left:123px;top:305px;width:188px;height:46px;background:#d4d0c8;box-shadow:inset 2px 2px 0 #ffffff,inset -2px -2px 0 #000000,inset -4px -4px 0 #85827d"></div>
<div class="a" style="left:311px;top:305px;width:93px;height:46px;background:#d4d0c8;box-shadow:inset 2px 2px 0 #ffffff,inset -2px -2px 0 #000000,inset -4px -4px 0 #85827d"></div>
<div class="t" style="left:-383px;width:1200px;text-align:center;top:318.5px;font-size:25.5px;font-weight:normal;color:#1a1a1a;letter-spacing:1.1px;">1 / 2</div>
<svg class="a" style="left:46px;top:313px" width="64" height="30" viewBox="0 0 64 30" shape-rendering="crispEdges"><path d="M2 15 L27 2 V9 H60 V21 H27 V28 Z" fill="#fff" stroke="#000" stroke-width="2"/></svg>
<svg class="a" style="left:327px;top:313px" width="64" height="30" viewBox="0 0 64 30" shape-rendering="crispEdges"><path d="M62 15 L37 2 V9 H4 V21 H37 V28 Z" fill="#fff" stroke="#000" stroke-width="2"/></svg>
<div class="a" style="left:32px;top:356px;width:91px;height:44px;background:#d4d0c8;box-shadow:inset 2px 2px 0 #ffffff,inset -2px -2px 0 #000000,inset -4px -4px 0 #85827d"></div>
<div class="t" style="left:-523px;width:1200px;text-align:center;top:366.5px;font-size:25.5px;font-weight:normal;color:#1a1a1a;letter-spacing:1.1px;">Help</div>
<div class="a" style="left:20px;top:444px;width:394px;height:342px;background:#d4d0c8;box-shadow:inset 2px 2px 0 #85827d,inset -2px -2px 0 #ffffff,inset 4px 4px 0 #ffffff,inset -4px -4px 0 #85827d"></div>
<div class="a" style="left:28px;top:421px;width:44px;height:44px;background:#d4d0c8;box-shadow:inset 2px 2px 0 #ffffff,inset -2px -2px 0 #85827d"></div>
<svg class="a" style="left:41px;top:440px" width="18" height="8" viewBox="0 0 18 8" shape-rendering="crispEdges"><path d="M9 0 L17 8 H1 Z" fill="#000"/></svg>
<div class="a" style="left:72px;top:421px;width:336px;height:44px;background:#d4d0c8;box-shadow:inset 2px 2px 0 #ffffff,inset -2px -2px 0 #85827d"></div>
<div class="a" style="left:72px;top:465px;width:336px;height:2px;background:#fff"></div>
<div class="t" style="left:-360px;width:1200px;text-align:center;top:430.5px;font-size:25.5px;font-weight:normal;color:#1a1a1a;letter-spacing:1.1px;">Attributes</div>
<div class="a" style="left:32px;top:480px;width:198px;height:45px;background:#d4d0c8;box-shadow:inset 2px 2px 0 #85827d,inset -2px -2px 0 #ffffff,inset 4px 4px 0 #ffffff,inset -4px -4px 0 #85827d"></div>
<div class="a" style="left:232px;top:480px;width:172px;height:45px;background:#fff;box-shadow:inset 2px 2px 0 #85827d,inset -2px -2px 0 #ffffff,inset 4px 4px 0 #ffffff,inset -4px -4px 0 #85827d"></div>
<div class="t" style="left:-469px;width:1200px;text-align:center;top:490.5px;font-size:25.5px;font-weight:normal;color:#1a1a1a;letter-spacing:1.1px;">id</div>
<div class="t" style="left:242px;top:490.5px;font-size:25.5px;font-weight:normal;color:#1a1a1a;letter-spacing:1.1px;">pf_2</div>
<div class="a" style="left:32px;top:530px;width:198px;height:44px;background:#d4d0c8;box-shadow:inset 2px 2px 0 #ffffff,inset -2px -2px 0 #000000,inset -4px -4px 0 #85827d"></div>
<div class="a" style="left:232px;top:530px;width:172px;height:45px;background:#fff;box-shadow:inset 2px 2px 0 #85827d,inset -2px -2px 0 #ffffff,inset 4px 4px 0 #ffffff,inset -4px -4px 0 #85827d"></div>
<div class="t" style="left:-451px;width:1200px;text-align:center;top:540.5px;font-size:25.5px;font-weight:normal;color:#1a1a1a;letter-spacing:1.1px;">type</div>
<div class="t" style="left:242px;top:540.5px;font-size:25.5px;font-weight:normal;color:#1a1a1a;letter-spacing:1.1px;"></div>
<div class="a" style="left:32px;top:580px;width:198px;height:44px;background:#d4d0c8;box-shadow:inset 2px 2px 0 #ffffff,inset -2px -2px 0 #000000,inset -4px -4px 0 #85827d"></div>
<div class="a" style="left:232px;top:580px;width:172px;height:45px;background:#fff;box-shadow:inset 2px 2px 0 #85827d,inset -2px -2px 0 #ffffff,inset 4px 4px 0 #ffffff,inset -4px -4px 0 #85827d"></div>
<div class="t" style="left:-449px;width:1200px;text-align:center;top:590.5px;font-size:25.5px;font-weight:normal;color:#1a1a1a;letter-spacing:1.1px;">color</div>
<div class="t" style="left:242px;top:590.5px;font-size:25.5px;font-weight:normal;color:#1a1a1a;letter-spacing:1.1px;">blue</div>
<div class="a" style="left:32px;top:630px;width:198px;height:45px;background:#d4d0c8;box-shadow:inset 2px 2px 0 #85827d,inset -2px -2px 0 #ffffff,inset 4px 4px 0 #ffffff,inset -4px -4px 0 #85827d"></div>
<div class="a" style="left:232px;top:630px;width:172px;height:45px;background:#fff;box-shadow:inset 2px 2px 0 #85827d,inset -2px -2px 0 #ffffff,inset 4px 4px 0 #ffffff,inset -4px -4px 0 #85827d"></div>
<div class="t" style="left:-469px;width:1200px;text-align:center;top:640.5px;font-size:25.5px;font-weight:normal;color:#1a1a1a;letter-spacing:1.1px;">departPos</div>
<div class="t" style="left:242px;top:640.5px;font-size:25.5px;font-weight:normal;color:#1a1a1a;letter-spacing:1.1px;">random</div>
<div class="a" style="left:32px;top:680px;width:198px;height:45px;background:#d4d0c8;box-shadow:inset 2px 2px 0 #85827d,inset -2px -2px 0 #ffffff,inset 4px 4px 0 #ffffff,inset -4px -4px 0 #85827d"></div>
<div class="a" style="left:232px;top:680px;width:172px;height:45px;background:#fff;box-shadow:inset 2px 2px 0 #85827d,inset -2px -2px 0 #ffffff,inset 4px 4px 0 #ffffff,inset -4px -4px 0 #85827d"></div>
<div class="t" style="left:-469px;width:1200px;text-align:center;top:690.5px;font-size:25.5px;font-weight:normal;color:#1a1a1a;letter-spacing:1.1px;">begin</div>
<div class="t" style="left:242px;top:690.5px;font-size:25.5px;font-weight:normal;color:#1a1a1a;letter-spacing:1.1px;">0.00</div>
<div class="t" style="left:224px;top:540.5px;font-size:25.5px;font-weight:normal;color:#1a1a1a;letter-spacing:1.1px;width:146px;overflow:hidden;clip-path:inset(0 0 0 10px)">ULT_PEDTYPE</div>
<svg class="a" style="left:244px;top:535px" width="20" height="36" viewBox="0 0 20 36" shape-rendering="crispEdges"><rect x="8" y="1" width="4" height="4" fill="#000"/><path d="M10 7 V20 M10 20 L4 34 M10 20 L15 26 V34 M10 10 L3 16 M10 10 L18 14" stroke="#000" stroke-width="3.2" fill="none"/></svg>
<div class="a" style="left:371px;top:537px;width:28px;height:32px;background:#d4d0c8;box-shadow:inset 2px 2px 0 #ffffff,inset -2px -2px 0 #000000,inset -4px -4px 0 #85827d"></div>
<svg class="a" style="left:376px;top:548px" width="18" height="10" viewBox="0 0 18 10" shape-rendering="crispEdges"><path d="M0 0 H18 L9 10 Z" fill="#000"/></svg>
<svg class="a" style="left:90px;top:534px" width="26" height="36" viewBox="0 0 26 36" shape-rendering="crispEdges"><rect x="4" y="0" width="6" height="8" fill="#ff7070"/><rect x="0" y="10" width="6" height="24" fill="#ff7070"/><rect x="10" y="0" width="8" height="8" fill="#f00"/><rect x="8" y="10" width="18" height="12" fill="#f00"/><rect x="10" y="22" width="14" height="4" fill="#f00"/><rect x="10" y="26" width="5" height="10" fill="#f00"/><rect x="19" y="26" width="5" height="10" fill="#f00"/></svg>
<svg class="a" style="left:79px;top:585px" width="32" height="32" viewBox="0 0 32 32" shape-rendering="crispEdges"><g shape-rendering="auto" transform="translate(16 16)"><path d="M0 0 L0 -15 A15 15 0 0 1 10.6 -10.6 Z" fill="#f00"/><path d="M0 0 L10.6 -10.6 A15 15 0 0 1 15 0 Z" fill="#f80"/><path d="M0 0 L15 0 A15 15 0 0 1 10.6 10.6 Z" fill="#fd0"/><path d="M0 0 L10.6 10.6 A15 15 0 0 1 0 15 Z" fill="#8d0"/><path d="M0 0 L0 15 A15 15 0 0 1 -10.6 10.6 Z" fill="#0c0"/><path d="M0 0 L-10.6 10.6 A15 15 0 0 1 -15 0 Z" fill="#0dd"/><path d="M0 0 L-15 0 A15 15 0 0 1 -10.6 -10.6 Z" fill="#08f"/><path d="M0 0 L-10.6 -10.6 A15 15 0 0 1 0 -15 Z" fill="#63a"/><circle r="15" fill="none" stroke="#222" stroke-width="1.5"/></g></svg>
<div class="a" style="left:32px;top:730px;width:91px;height:45px;background:#d4d0c8;box-shadow:inset 2px 2px 0 #ffffff,inset -2px -2px 0 #000000,inset -4px -4px 0 #85827d"></div>
<div class="t" style="left:-523px;width:1200px;text-align:center;top:741.5px;font-size:25.5px;font-weight:normal;color:#1a1a1a;letter-spacing:1.1px;">Help</div>
<div class="a" style="left:20px;top:819px;width:394px;height:291px;background:#d4d0c8;box-shadow:inset 2px 2px 0 #85827d,inset -2px -2px 0 #ffffff,inset 4px 4px 0 #ffffff,inset -4px -4px 0 #85827d"></div>
<div class="a" style="left:28px;top:796px;width:44px;height:44px;background:#d4d0c8;box-shadow:inset 2px 2px 0 #ffffff,inset -2px -2px 0 #85827d"></div>
<svg class="a" style="left:41px;top:815px" width="18" height="8" viewBox="0 0 18 8" shape-rendering="crispEdges"><path d="M9 0 L17 8 H1 Z" fill="#000"/></svg>
<div class="a" style="left:72px;top:796px;width:336px;height:44px;background:#d4d0c8;box-shadow:inset 2px 2px 0 #ffffff,inset -2px -2px 0 #85827d"></div>
<div class="a" style="left:72px;top:840px;width:336px;height:2px;background:#fff"></div>
<div class="t" style="left:-360px;width:1200px;text-align:center;top:805.5px;font-size:25.5px;font-weight:normal;color:#1a1a1a;letter-spacing:1.1px;">Flow attributes</div>
<div class="a" style="left:32px;top:854px;width:198px;height:45px;background:#d4d0c8;box-shadow:inset 2px 2px 0 #85827d,inset -2px -2px 0 #ffffff,inset 4px 4px 0 #ffffff,inset -4px -4px 0 #85827d"></div>
<div class="a" style="left:232px;top:854px;width:172px;height:45px;background:#fff;box-shadow:inset 2px 2px 0 #85827d,inset -2px -2px 0 #ffffff,inset 4px 4px 0 #ffffff,inset -4px -4px 0 #85827d"></div>
<div class="t" style="left:-469px;width:1200px;text-align:center;top:864.5px;font-size:25.5px;font-weight:normal;color:#1a1a1a;letter-spacing:1.1px;">terminate</div>
<div class="t" style="left:242px;top:864.5px;font-size:25.5px;font-weight:normal;color:#1a1a1a;letter-spacing:1.1px;">end</div>
<div class="a" style="left:32px;top:904px;width:198px;height:45px;background:#d4d0c8;box-shadow:inset 2px 2px 0 #85827d,inset -2px -2px 0 #ffffff,inset 4px 4px 0 #ffffff,inset -4px -4px 0 #85827d"></div>
<div class="a" style="left:232px;top:904px;width:172px;height:45px;background:#fff;box-shadow:inset 2px 2px 0 #85827d,inset -2px -2px 0 #ffffff,inset 4px 4px 0 #ffffff,inset -4px -4px 0 #85827d"></div>
<div class="t" style="left:-469px;width:1200px;text-align:center;top:914.5px;font-size:25.5px;font-weight:normal;color:#1a1a1a;letter-spacing:1.1px;">spacing</div>
<div class="t" style="left:242px;top:914.5px;font-size:25.5px;font-weight:normal;color:#1a1a1a;letter-spacing:1.1px;">period</div>
<div class="a" style="left:32px;top:954px;width:198px;height:45px;background:#d4d0c8;box-shadow:inset 2px 2px 0 #85827d,inset -2px -2px 0 #ffffff,inset 4px 4px 0 #ffffff,inset -4px -4px 0 #85827d"></div>
<div class="a" style="left:232px;top:954px;width:172px;height:45px;background:#fff;box-shadow:inset 2px 2px 0 #85827d,inset -2px -2px 0 #ffffff,inset 4px 4px 0 #ffffff,inset -4px -4px 0 #85827d"></div>
<div class="t" style="left:-469px;width:1200px;text-align:center;top:964.5px;font-size:25.5px;font-weight:normal;color:#1a1a1a;letter-spacing:1.1px;">end</div>
<div class="t" style="left:242px;top:964.5px;font-size:25.5px;font-weight:normal;color:#1a1a1a;letter-spacing:1.1px;">3600.00</div>
<div class="a" style="left:32px;top:1004px;width:198px;height:45px;background:#d4d0c8;box-shadow:inset 2px 2px 0 #85827d,inset -2px -2px 0 #ffffff,inset 4px 4px 0 #ffffff,inset -4px -4px 0 #85827d"></div>
<div class="a" style="left:232px;top:1004px;width:172px;height:45px;background:#fff;box-shadow:inset 2px 2px 0 #85827d,inset -2px -2px 0 #ffffff,inset 4px 4px 0 #ffffff,inset -4px -4px 0 #85827d"></div>
<div class="t" style="left:-469px;width:1200px;text-align:center;top:1014.5px;font-size:25.5px;font-weight:normal;color:#1a1a1a;letter-spacing:1.1px;">period</div>
<div class="t" style="left:242px;top:1014.5px;font-size:25.5px;font-weight:normal;color:#1a1a1a;letter-spacing:1.1px;">4.00</div>
<div class="a" style="left:371px;top:858px;width:28px;height:36px;background:#d4d0c8;box-shadow:inset 2px 2px 0 #ffffff,inset -2px -2px 0 #000000,inset -4px -4px 0 #85827d"></div>
<svg class="a" style="left:376px;top:874px" width="18" height="10" viewBox="0 0 18 10" shape-rendering="crispEdges"><path d="M0 0 H18 L9 10 Z" fill="#000"/></svg>
<div class="a" style="left:371px;top:908px;width:28px;height:36px;background:#d4d0c8;box-shadow:inset 2px 2px 0 #ffffff,inset -2px -2px 0 #000000,inset -4px -4px 0 #85827d"></div>
<svg class="a" style="left:376px;top:924px" width="18" height="10" viewBox="0 0 18 10" shape-rendering="crispEdges"><path d="M0 0 H18 L9 10 Z" fill="#000"/></svg>
<div class="a" style="left:32px;top:1054px;width:91px;height:44px;background:#d4d0c8;box-shadow:inset 2px 2px 0 #ffffff,inset -2px -2px 0 #000000,inset -4px -4px 0 #85827d"></div>
<div class="t" style="left:-523px;width:1200px;text-align:center;top:1065.5px;font-size:25.5px;font-weight:normal;color:#1a1a1a;letter-spacing:1.1px;">Help</div>
<div class="a" style="left:20px;top:1143px;width:394px;height:140px;background:#d4d0c8;box-shadow:inset 2px 2px 0 #85827d,inset -2px -2px 0 #ffffff,inset 4px 4px 0 #ffffff,inset -4px -4px 0 #85827d"></div>
<div class="a" style="left:28px;top:1120px;width:44px;height:44px;background:#d4d0c8;box-shadow:inset 2px 2px 0 #ffffff,inset -2px -2px 0 #85827d"></div>
<svg class="a" style="left:41px;top:1139px" width="18" height="8" viewBox="0 0 18 8" shape-rendering="crispEdges"><path d="M9 0 L17 8 H1 Z" fill="#000"/></svg>
<div class="a" style="left:72px;top:1120px;width:336px;height:44px;background:#d4d0c8;box-shadow:inset 2px 2px 0 #ffffff,inset -2px -2px 0 #85827d"></div>
<div class="a" style="left:72px;top:1164px;width:336px;height:2px;background:#fff"></div>
<div class="t" style="left:-360px;width:1200px;text-align:center;top:1129.5px;font-size:25.5px;font-weight:normal;color:#1a1a1a;letter-spacing:1.1px;">Parameters</div>
<div class="a" style="left:32px;top:1177px;width:372px;height:45px;background:#fff;box-shadow:inset 2px 2px 0 #85827d,inset -2px -2px 0 #ffffff,inset 4px 4px 0 #ffffff,inset -4px -4px 0 #85827d"></div>
<div class="a" style="left:32px;top:1227px;width:372px;height:46px;background:#d4d0c8;box-shadow:inset 2px 2px 0 #ffffff,inset -2px -2px 0 #000000,inset -4px -4px 0 #85827d"></div>
<div class="t" style="left:-383px;width:1200px;text-align:center;top:1237.5px;font-size:25.5px;font-weight:normal;color:#1a1a1a;letter-spacing:1.1px;">Edit parameters</div>
<div class="a" style="left:20px;top:1317px;width:394px;height:90px;background:#d4d0c8;box-shadow:inset 2px 2px 0 #85827d,inset -2px -2px 0 #ffffff,inset 4px 4px 0 #ffffff,inset -4px -4px 0 #85827d"></div>
<div class="a" style="left:28px;top:1294px;width:44px;height:44px;background:#d4d0c8;box-shadow:inset 2px 2px 0 #ffffff,inset -2px -2px 0 #85827d"></div>
<svg class="a" style="left:41px;top:1313px" width="18" height="8" viewBox="0 0 18 8" shape-rendering="crispEdges"><path d="M9 0 L17 8 H1 Z" fill="#000"/></svg>
<div class="a" style="left:72px;top:1294px;width:336px;height:44px;background:#d4d0c8;box-shadow:inset 2px 2px 0 #ffffff,inset -2px -2px 0 #85827d"></div>
<div class="a" style="left:72px;top:1338px;width:336px;height:2px;background:#fff"></div>
<div class="t" style="left:-360px;width:1200px;text-align:center;top:1303.5px;font-size:25.5px;font-weight:normal;color:#1a1a1a;letter-spacing:1.1px;">Netedit attributes</div>
<div class="a" style="left:32px;top:1351px;width:372px;height:46px;background:#d4d0c8;box-shadow:inset 2px 2px 0 #ffffff,inset -2px -2px 0 #000000,inset -4px -4px 0 #85827d"></div>
<div class="t" style="left:-361px;width:1200px;text-align:center;top:1361.5px;font-size:25.5px;font-weight:normal;color:#1a1a1a;letter-spacing:1.1px;">Front element</div>
<svg class="a" style="left:112px;top:1359px" width="32" height="32" viewBox="0 0 32 32" shape-rendering="crispEdges"><rect width="32" height="32" fill="#00f"/><rect x="8" y="8" width="16" height="16" fill="#d4d0c8"/><rect x="0" y="0" width="8" height="8" fill="#0f0"/><rect x="16" y="0" width="8" height="8" fill="#0f0"/><rect x="24" y="8" width="8" height="8" fill="#0f0"/><rect x="0" y="16" width="8" height="8" fill="#0f0"/><rect x="24" y="24" width="8" height="8" fill="#0f0"/><rect x="8" y="24" width="8" height="8" fill="#0f0"/></svg>
<div class="a" style="left:20px;top:1440px;width:394px;height:205px;background:#d4d0c8;box-shadow:inset 2px 2px 0 #85827d,inset -2px -2px 0 #ffffff,inset 4px 4px 0 #ffffff,inset -4px -4px 0 #85827d"></div>
<div class="a" style="left:28px;top:1418px;width:44px;height:44px;background:#d4d0c8;box-shadow:inset 2px 2px 0 #ffffff,inset -2px -2px 0 #85827d"></div>
<svg class="a" style="left:41px;top:1437px" width="18" height="8" viewBox="0 0 18 8" shape-rendering="crispEdges"><path d="M9 0 L17 8 H1 Z" fill="#000"/></svg>
<div class="a" style="left:72px;top:1418px;width:336px;height:44px;background:#d4d0c8;box-shadow:inset 2px 2px 0 #ffffff,inset -2px -2px 0 #85827d"></div>
<div class="a" style="left:72px;top:1462px;width:336px;height:2px;background:#fff"></div>
<div class="t" style="left:-360px;width:1200px;text-align:center;top:1427.5px;font-size:25.5px;font-weight:normal;color:#1a1a1a;letter-spacing:1.1px;">Hierarchy</div>
<div class="a" style="left:32px;top:1475px;width:372px;height:131px;background:#fff"></div>
<svg class="a" style="left:40px;top:1478px" width="20" height="34" viewBox="0 0 20 34" shape-rendering="crispEdges"><rect x="8" y="1" width="4" height="4" fill="#000"/><path d="M10 7 V20 M10 20 L4 33 M10 20 L15 26 V33 M10 10 L3 16 M10 10 L18 14" stroke="#000" stroke-width="3" fill="none"/></svg>
<div class="t" style="left:80px;top:1481.5px;font-size:25.5px;font-weight:normal;color:#1a1a1a;letter-spacing:1.1px;width:324px;overflow:hidden">vType: DEFAULT_PEDTYPE</div>
<div class="a" style="left:56px;top:1514px;width:1px;height:14px;border-left:1px dotted #000"></div>
<div class="a" style="left:48px;top:1528px;width:19px;height:18px;background:#fff;border:2px solid #808080"></div>
<div class="a" style="left:52px;top:1536px;width:11px;height:2px;background:#000"></div>
<svg class="a" style="left:78px;top:1520px" width="26" height="34" viewBox="0 0 26 34" shape-rendering="crispEdges"><rect x="4" y="0" width="6" height="7" fill="#ff7070"/><rect x="0" y="9" width="6" height="24" fill="#ff7070"/><rect x="10" y="0" width="8" height="7" fill="#f00"/><rect x="8" y="9" width="18" height="12" fill="#f00"/><rect x="10" y="21" width="14" height="4" fill="#f00"/><rect x="10" y="25" width="5" height="9" fill="#f00"/><rect x="19" y="25" width="5" height="9" fill="#f00"/></svg>
<div class="t" style="left:117px;top:1520.5px;font-size:25.5px;font-weight:normal;color:#1a1a1a;letter-spacing:1.25px;">personFlow: pf_2</div>
<div class="a" style="left:92px;top:1556px;width:1px;height:20px;border-left:1px dotted #000"></div>
<div class="a" style="left:92px;top:1576px;width:14px;height:1px;border-top:1px dotted #000"></div>
<svg class="a" style="left:108px;top:1559px" width="32" height="32" viewBox="0 0 32 32" shape-rendering="crispEdges"><rect width="32" height="32" fill="#c000ff"/><rect x="2" y="14" width="12" height="4" fill="#000"/><rect x="14" y="4" width="16" height="4" fill="#000"/><rect x="22" y="4" width="8" height="24" fill="#000"/><rect x="2" y="24" width="22" height="4" fill="#000"/><path d="M6 2 V12 M2 8 L6 12 L10 8" stroke="#00f" stroke-width="2" fill="none"/><path d="M2 26 H12 M6 22 V30" stroke="#00f" stroke-width="2"/></svg>
<div class="t" style="left:152px;top:1560.5px;font-size:25.5px;font-weight:normal;color:#1a1a1a;letter-spacing:1.4500000000000002px;width:252px;overflow:hidden">persontrip: E6 -> E7</div>
<div class="a" style="left:32px;top:1606px;width:372px;height:28px;background-color:#fff;background-image:linear-gradient(45deg,#d4d0c8 25%,transparent 25%,transparent 75%,#d4d0c8 75%),linear-gradient(45deg,#d4d0c8 25%,transparent 25%,transparent 75%,#d4d0c8 75%);background-size:4px 4px;background-position:0 0,2px 2px"></div>
<div class="a" style="left:32px;top:1606px;width:30px;height:28px;background:#d4d0c8;box-shadow:inset 2px 2px 0 #ffffff,inset -2px -2px 0 #000000,inset -4px -4px 0 #85827d"></div>
<svg class="a" style="left:41px;top:1613px" width="9" height="14" viewBox="0 0 9 14" shape-rendering="crispEdges"><path d="M9 0 V14 L0 7 Z" fill="#000"/></svg>
<div class="a" style="left:61px;top:1606px;width:292px;height:28px;background:#d4d0c8;box-shadow:inset 2px 2px 0 #ffffff,inset -2px -2px 0 #000000,inset -4px -4px 0 #85827d"></div>
<div class="a" style="left:374px;top:1606px;width:30px;height:28px;background:#d4d0c8;box-shadow:inset 2px 2px 0 #ffffff,inset -2px -2px 0 #000000,inset -4px -4px 0 #85827d"></div>
<svg class="a" style="left:385px;top:1613px" width="9" height="14" viewBox="0 0 9 14" shape-rendering="crispEdges"><path d="M0 0 V14 L9 7 Z" fill="#000"/></svg>
<div class="a" style="left:458px;top:171px;width:2414px;height:1512px;background:#fff;box-shadow:inset 2px 2px 0 #85827d,inset -2px -2px 0 #ffffff"></div>
<div class="t" style="left:473px;top:1618.3px;font-size:23px;font-weight:bold;color:#000;letter-spacing:0px;">0</div>
<div class="t" style="left:655px;top:1618.3px;font-size:23px;font-weight:bold;color:#000;letter-spacing:0px;">10m</div>
<div class="a" style="left:484px;top:1651px;width:2px;height:16px;background:#000"></div>
<div class="a" style="left:484px;top:1665px;width:184px;height:2px;background:#000"></div>
<div class="a" style="left:666px;top:1651px;width:2px;height:16px;background:#000"></div>
<div class="a" style="left:0px;top:1683px;width:2880px;height:9px;background:#d4d0c8"></div>
<div class="a" style="left:0px;top:1692px;width:2880px;height:2px;background:#fff"></div>
<div class="a" style="left:8px;top:1700px;width:2092px;height:43px;background:#d4d0c8;box-shadow:inset 2px 2px 0 #85827d,inset -2px -2px 0 #ffffff"></div>
<div class="t" style="left:17px;top:1708.5px;font-size:25.5px;font-weight:normal;color:#1a1a1a;letter-spacing:1.1px;">Finished computing demand elements.</div>
<div class="a" style="left:2108px;top:1700px;width:241px;height:43px;background:#d4d0c8;box-shadow:inset 2px 2px 0 #85827d,inset -2px -2px 0 #ffffff"></div>
<div class="t" style="left:2114px;top:1708.5px;font-size:25.5px;font-weight:normal;color:#1a1a1a;letter-spacing:2.15px;">x:-59.13, y:37.18</div>
<div class="a" style="left:2359px;top:1700px;width:300px;height:43px;background:#d4d0c8;box-shadow:inset 2px 2px 0 #85827d,inset -2px -2px 0 #ffffff"></div>
<div class="t" style="left:2365px;top:1708.5px;font-size:25.5px;font-weight:normal;color:#1a1a1a;letter-spacing:1.1px;">(No projection defined)</div>
<div class="a" style="left:2668px;top:1700px;width:203px;height:43px;background:#ebfbd0;box-shadow:inset 2px 2px 0 #85827d,inset -2px -2px 0 #ffffff"></div>
<svg class="a" style="left:2753px;top:1706px" width="34" height="34" viewBox="0 0 34 34" shape-rendering="crispEdges"><circle cx="17" cy="17" r="16" fill="#20a880" shape-rendering="auto"/><path d="M9 17 L15 23 L25 12" stroke="#fff" stroke-width="3.5" fill="none" shape-rendering="auto"/></svg>
<div class="a" style="left:0px;top:1749px;width:2880px;height:4px;background:#1a1a14"></div>
<svg class="a" style="left:2850px;top:1722px" width="28" height="28" viewBox="0 0 28 28" shape-rendering="crispEdges"><path d="M27 4 L4 27 M27 12 L12 27 M27 20 L20 27" stroke="#8a8a8a" stroke-width="2" shape-rendering="auto"/></svg>
<svg class="a" style="left:0;top:0" width="2880" height="1753" viewBox="0 0 2880 1753" shape-rendering="crispEdges"><defs><clipPath id="cv"><rect x="460" y="173" width="2410" height="1508"/></clipPath></defs><g clip-path="url(#cv)"><rect x="1586" y="203" width="34" height="600" fill="#808080"/><rect x="1620" y="203" width="116" height="600" fill="#000"/><rect x="1736" y="203" width="36" height="600" fill="#808080"/><rect x="1675" y="203" width="4" height="600" fill="#fff"/><rect x="1618" y="257" width="4" height="50" fill="#fff"/><rect x="1618" y="366" width="4" height="25" fill="#fff"/><rect x="1618" y="450" width="4" height="50" fill="#fff"/><rect x="1618" y="560" width="4" height="50" fill="#fff"/><rect x="1618" y="670" width="4" height="50" fill="#fff"/><rect x="1618" y="760" width="4" height="50" fill="#fff"/><rect x="1736" y="203" width="4" height="50" fill="#fff"/><rect x="1736" y="281" width="4" height="50" fill="#fff"/><rect x="1736" y="396" width="4" height="25" fill="#fff"/><rect x="1736" y="477" width="4" height="50" fill="#fff"/><rect x="1736" y="590" width="4" height="50" fill="#fff"/><rect x="1736" y="700" width="4" height="50" fill="#fff"/><rect x="1591" y="420" width="3" height="22" fill="#111"/><rect x="1592" y="694" width="3" height="20" fill="#111"/><rect x="1596" y="1102" width="3" height="14" fill="#111"/><rect x="1598" y="1700" width="3" height="14" fill="#111"/><polygon points="1588,1068 1622,1068 1626,1646 1590,1646" fill="#808080"/><polygon points="1622,1068 1737,1068 1742,1646 1626,1646" fill="#000"/><polygon points="1737,1068 1773,1068 1776,1646 1742,1646" fill="#808080"/><polygon points="1678,1068 1682,1068 1686,1646 1682,1646" fill="#fff"/><rect x="1622" y="1124" width="4" height="50" fill="#fff"/><rect x="1623" y="1234" width="4" height="50" fill="#fff"/><rect x="1623" y="1344" width="4" height="50" fill="#fff"/><rect x="1624" y="1460" width="4" height="50" fill="#fff"/><rect x="1625" y="1570" width="4" height="50" fill="#fff"/><rect x="1738" y="1137" width="4" height="50" fill="#fff"/><rect x="1739" y="1247" width="4" height="50" fill="#fff"/><rect x="1740" y="1357" width="4" height="50" fill="#fff"/><rect x="1740" y="1460" width="4" height="50" fill="#fff"/><rect x="1741" y="1570" width="4" height="50" fill="#fff"/><rect x="941" y="845" width="607" height="34" fill="#808080"/><rect x="941" y="879" width="607" height="117" fill="#000"/><rect x="941" y="996" width="607" height="35" fill="#808080"/><rect x="941" y="935" width="607" height="4" fill="#fff"/><rect x="942" y="877" width="22" height="4" fill="#fff"/><rect x="1018" y="877" width="54" height="4" fill="#fff"/><rect x="1220" y="877" width="53" height="4" fill="#fff"/><rect x="1328" y="877" width="55" height="4" fill="#fff"/><rect x="1438" y="877" width="53" height="4" fill="#fff"/><rect x="1010" y="994" width="48" height="4" fill="#fff"/><rect x="1105" y="994" width="48" height="4" fill="#fff"/><rect x="1190" y="994" width="48" height="4" fill="#fff"/><rect x="1297" y="994" width="48" height="4" fill="#fff"/><rect x="1404" y="994" width="48" height="4" fill="#fff"/><rect x="1510" y="994" width="48" height="4" fill="#fff"/><polygon points="1812,841.6 2505,832.5 2505,869 1812,876" fill="#808080"/><polygon points="1812,876 2505,869 2505,985 1812,992" fill="#000"/><polygon points="1812,931 2505,925 2505,929 1812,935" fill="#fff"/><polygon points="1812,992 2505,985 2505,1019 1812,1027" fill="#808080"/><rect x="1840" y="872.7171717171717" width="50" height="4" fill="#fff"/><rect x="1947" y="871.6363636363636" width="50" height="4" fill="#fff"/><rect x="2056" y="870.5353535353536" width="50" height="4" fill="#fff"/><rect x="2166" y="869.4242424242424" width="50" height="4" fill="#fff"/><rect x="2286" y="868.2121212121212" width="50" height="4" fill="#fff"/><rect x="2397" y="867.0909090909091" width="50" height="4" fill="#fff"/><rect x="1866" y="988.4545454545455" width="50" height="4" fill="#fff"/><rect x="1976" y="987.3434343434343" width="50" height="4" fill="#fff"/><rect x="2086" y="986.2323232323232" width="50" height="4" fill="#fff"/><rect x="2194" y="985.1414141414141" width="50" height="4" fill="#fff"/><rect x="2336" y="983.7070707070707" width="50" height="4" fill="#fff"/><rect x="2446" y="982.5959595959596" width="50" height="4" fill="#fff"/><polygon points="1581,801 1777,801 1812,841 1812,1030 1777,1072 1581,1072 1546,1030 1546,843" fill="#680000"/><rect x="1618" y="805" width="10" height="72" fill="#e4e4e4"/><rect x="1621" y="995" width="9" height="73" fill="#e4e4e4"/><rect x="1548" y="878" width="72" height="9.5" fill="#e4e4e4"/><rect x="1738" y="875" width="74" height="9.5" fill="#e4e4e4"/><rect x="1636" y="805" width="10" height="72" fill="#e4e4e4"/><rect x="1639" y="995" width="9" height="73" fill="#e4e4e4"/><rect x="1548" y="896" width="72" height="9.5" fill="#e4e4e4"/><rect x="1738" y="893" width="74" height="9.5" fill="#e4e4e4"/><rect x="1654" y="805" width="10" height="72" fill="#e4e4e4"/><rect x="1657" y="995" width="9" height="73" fill="#e4e4e4"/><rect x="1548" y="914" width="72" height="9.5" fill="#e4e4e4"/><rect x="1738" y="911" width="74" height="9.5" fill="#e4e4e4"/><rect x="1672" y="805" width="10" height="72" fill="#e4e4e4"/><rect x="1675" y="995" width="9" height="73" fill="#e4e4e4"/><rect x="1548" y="932" width="72" height="9.5" fill="#e4e4e4"/><rect x="1738" y="929" width="74" height="9.5" fill="#e4e4e4"/><rect x="1690" y="805" width="10" height="72" fill="#e4e4e4"/><rect x="1693" y="995" width="9" height="73" fill="#e4e4e4"/><rect x="1548" y="950" width="72" height="9.5" fill="#e4e4e4"/><rect x="1738" y="947" width="74" height="9.5" fill="#e4e4e4"/><rect x="1708" y="805" width="10" height="72" fill="#e4e4e4"/><rect x="1711" y="995" width="9" height="73" fill="#e4e4e4"/><rect x="1548" y="968" width="72" height="9.5" fill="#e4e4e4"/><rect x="1738" y="965" width="74" height="9.5" fill="#e4e4e4"/><rect x="1726" y="805" width="10" height="72" fill="#e4e4e4"/><rect x="1729" y="995" width="9" height="73" fill="#e4e4e4"/><rect x="1548" y="986" width="72" height="9.5" fill="#e4e4e4"/><rect x="1738" y="983" width="74" height="9.5" fill="#e4e4e4"/><rect x="1620" y="877" width="117" height="117" fill="#680000"/><g transform="" shape-rendering="auto"><path d="M1581,804 L1619,804 L1619,830 Q1610,868 1555,876 L1547,876 L1547,843 Z" fill="#680000"/><path d="M1584,807 L1549,847 Q1578,840 1584,807 Z" fill="#fff"/><path d="M1581,804 L1619,804 L1619,830 Q1610,868 1555,876 L1547,876 L1547,843 Z" fill="none" stroke="#ceb2b2" stroke-width="7" stroke-linejoin="miter"/></g><g transform="translate(3358 0) scale(-1 1)" shape-rendering="auto"><path d="M1581,804 L1619,804 L1619,830 Q1610,868 1555,876 L1547,876 L1547,843 Z" fill="#680000"/><path d="M1584,807 L1549,847 Q1578,840 1584,807 Z" fill="#fff"/><path d="M1581,804 L1619,804 L1619,830 Q1610,868 1555,876 L1547,876 L1547,843 Z" fill="none" stroke="#ceb2b2" stroke-width="7" stroke-linejoin="miter"/></g><g transform="translate(0 1873) scale(1 -1)" shape-rendering="auto"><path d="M1581,804 L1619,804 L1619,830 Q1610,868 1555,876 L1547,876 L1547,843 Z" fill="#680000"/><path d="M1584,807 L1549,847 Q1578,840 1584,807 Z" fill="#fff"/><path d="M1581,804 L1619,804 L1619,830 Q1610,868 1555,876 L1547,876 L1547,843 Z" fill="none" stroke="#ceb2b2" stroke-width="7" stroke-linejoin="miter"/></g><g transform="translate(3358 1873) scale(-1 -1)" shape-rendering="auto"><path d="M1581,804 L1619,804 L1619,830 Q1610,868 1555,876 L1547,876 L1547,843 Z" fill="#680000"/><path d="M1584,807 L1549,847 Q1578,840 1584,807 Z" fill="#fff"/><path d="M1581,804 L1619,804 L1619,830 Q1610,868 1555,876 L1547,876 L1547,843 Z" fill="none" stroke="#ceb2b2" stroke-width="7" stroke-linejoin="miter"/></g><polyline points="941,861 1548,861 1812,858 2505,847" fill="none" stroke="#c800ff" stroke-width="8" shape-rendering="auto"/><polygon points="1592,196 1610,196 1616,1646 1598,1646" fill="#c800ff"/><rect x="941" y="859" width="80" height="4" fill="#f00"/><polygon points="1016,855 1034,861 1016,867" fill="#f00"/><rect x="1584" y="391" width="190" height="4" fill="#680000"/><rect x="1590" y="1466" width="190" height="4" fill="#680000"/><rect x="1127" y="845" width="5" height="187" fill="#680000"/><rect x="2275" y="835" width="5" height="190" fill="#680000"/><rect x="1648" y="317" width="2" height="53" fill="#fff"/><polygon points="1644,354 1654,354 1649,370" fill="#fff"/><rect x="1706" y="417" width="2" height="53" fill="#fff"/><polygon points="1702,433 1712,433 1707,417" fill="#fff"/><rect x="1655" y="1408" width="2" height="37" fill="#fff"/><polygon points="1651,1429 1661,1429 1656,1445" fill="#fff"/><rect x="1713" y="1491" width="2" height="40" fill="#fff"/><polygon points="1709,1507 1719,1507 1714,1491" fill="#fff"/><rect x="1154" y="909" width="52" height="2" fill="#fff"/><polygon points="1170,905 1170,915 1154,910" fill="#fff"/><rect x="1054" y="966" width="54" height="2" fill="#fff"/><polygon points="1092,962 1092,972 1108,967" fill="#fff"/><rect x="2298" y="899" width="55" height="2" fill="#fff"/><polygon points="2314,895 2314,905 2298,900" fill="#fff"/><rect x="2202" y="958" width="52" height="2" fill="#fff"/><polygon points="2238,954 2238,964 2254,959" fill="#fff"/><rect x="1623" y="757" width="52" height="3" fill="#fff"/><rect x="1648" y="732" width="3" height="52" fill="#fff"/><polygon points="1623,758 1635,753 1635,763" fill="#fff"/><polygon points="1675,758 1663,753 1663,763" fill="#fff"/><polygon points="1644,770 1654,770 1649,786" fill="#fff"/><rect x="1684" y="1113" width="52" height="3" fill="#fff"/><rect x="1709" y="1088" width="3" height="52" fill="#fff"/><polygon points="1684,1114 1696,1109 1696,1119" fill="#fff"/><polygon points="1736,1114 1724,1109 1724,1119" fill="#fff"/><polygon points="1705,1102 1715,1102 1710,1086" fill="#fff"/><rect x="1475" y="965" width="52" height="3" fill="#fff"/><rect x="1500" y="940" width="3" height="52" fill="#fff"/><polygon points="1527,966 1515,961 1515,971" fill="#fff"/><polygon points="1496,978 1506,978 1501,994" fill="#fff"/><polygon points="1496,954 1506,954 1501,938" fill="#fff"/><rect x="1831" y="905" width="52" height="3" fill="#fff"/><rect x="1856" y="880" width="3" height="52" fill="#fff"/><polygon points="1831,906 1843,901 1843,911" fill="#fff"/><polygon points="1852,918 1862,918 1857,934" fill="#fff"/><polygon points="1852,894 1862,894 1857,878" fill="#fff"/><g transform="translate(972 1003)" fill="none" stroke="#222" stroke-width="2.6"><circle cx="7" cy="2.5" r="2.5" fill="#222"/><path d="M6 5 L5 13 L1 22 M5 13 L10 17 L10 22 M6 8 L12 12 M6 8 L2 13"/></g><g transform="translate(1163 1005)" fill="none" stroke="#222" stroke-width="2.6"><circle cx="7" cy="2.5" r="2.5" fill="#222"/><path d="M6 5 L5 13 L1 22 M5 13 L10 17 L10 22 M6 8 L12 12 M6 8 L2 13"/></g><g transform="translate(1436 1004)" fill="none" stroke="#222" stroke-width="2.6"><circle cx="7" cy="2.5" r="2.5" fill="#222"/><path d="M6 5 L5 13 L1 22 M5 13 L10 17 L10 22 M6 8 L12 12 M6 8 L2 13"/></g><g transform="translate(1843 998)" fill="none" stroke="#222" stroke-width="2.6"><circle cx="7" cy="2.5" r="2.5" fill="#222"/><path d="M6 5 L5 13 L1 22 M5 13 L10 17 L10 22 M6 8 L12 12 M6 8 L2 13"/></g><g transform="translate(2115 987)" fill="none" stroke="#222" stroke-width="2.6"><circle cx="7" cy="2.5" r="2.5" fill="#222"/><path d="M6 5 L5 13 L1 22 M5 13 L10 17 L10 22 M6 8 L12 12 M6 8 L2 13"/></g><g transform="translate(2317 985)" fill="none" stroke="#222" stroke-width="2.6"><circle cx="7" cy="2.5" r="2.5" fill="#222"/><path d="M6 5 L5 13 L1 22 M5 13 L10 17 L10 22 M6 8 L12 12 M6 8 L2 13"/></g><g transform="translate(1747 364) rotate(-90)" fill="none" stroke="#222" stroke-width="2.6"><circle cx="7" cy="2.5" r="2.5" fill="#222"/><path d="M6 5 L5 13 L1 22 M5 13 L10 17 L10 22 M6 8 L12 12 M6 8 L2 13"/></g><g transform="translate(1747 505) rotate(-90)" fill="none" stroke="#222" stroke-width="2.6"><circle cx="7" cy="2.5" r="2.5" fill="#222"/><path d="M6 5 L5 13 L1 22 M5 13 L10 17 L10 22 M6 8 L12 12 M6 8 L2 13"/></g><g transform="translate(1747 778) rotate(-90)" fill="none" stroke="#222" stroke-width="2.6"><circle cx="7" cy="2.5" r="2.5" fill="#222"/><path d="M6 5 L5 13 L1 22 M5 13 L10 17 L10 22 M6 8 L12 12 M6 8 L2 13"/></g><g transform="translate(1752 1170) rotate(-90)" fill="none" stroke="#222" stroke-width="2.6"><circle cx="7" cy="2.5" r="2.5" fill="#222"/><path d="M6 5 L5 13 L1 22 M5 13 L10 17 L10 22 M6 8 L12 12 M6 8 L2 13"/></g><g transform="translate(1752 1437) rotate(-90)" fill="none" stroke="#222" stroke-width="2.6"><circle cx="7" cy="2.5" r="2.5" fill="#222"/><path d="M6 5 L5 13 L1 22 M5 13 L10 17 L10 22 M6 8 L12 12 M6 8 L2 13"/></g><g transform="translate(1752 1627) rotate(-90)" fill="none" stroke="#222" stroke-width="2.6"><circle cx="7" cy="2.5" r="2.5" fill="#222"/><path d="M6 5 L5 13 L1 22 M5 13 L10 17 L10 22 M6 8 L12 12 M6 8 L2 13"/></g><rect x="1562" y="197" width="27" height="8" fill="#e8e8e8"/><rect x="1590" y="195" width="26" height="8" fill="#111"/><rect x="1616" y="197" width="26" height="8" fill="#e8e8e8"/><rect x="1556" y="203" width="6" height="20" fill="#111"/><rect x="1556" y="223" width="6" height="18" fill="#e8e8e8"/><rect x="1642" y="203" width="8" height="20" fill="#111"/><rect x="1642" y="223" width="8" height="18" fill="#e8e8e8"/><rect x="1562" y="241" width="27" height="8" fill="#111"/><rect x="1590" y="241" width="26" height="8" fill="#e8e8e8"/><rect x="1616" y="241" width="26" height="8" fill="#111"/><ellipse cx="1602" cy="223" rx="40.0" ry="16.0" fill="#5050ff" shape-rendering="auto"/><ellipse cx="1602" cy="223" rx="20.0" ry="20.0" fill="#0000ff" shape-rendering="auto"/><rect x="1584" y="225" width="36" height="11" fill="#00ffff" stroke="#777" stroke-width="1.5"/><ellipse cx="1129" cy="883" rx="46.0" ry="18.0" fill="#ff5050" shape-rendering="auto"/><ellipse cx="1129" cy="883" rx="23.0" ry="22.0" fill="#ff0000" shape-rendering="auto"/><rect x="1110" y="885" width="36" height="11" fill="#00ffff" stroke="#777" stroke-width="1.5"/><ellipse cx="2506" cy="870" rx="44" ry="18" fill="#50ff50" shape-rendering="auto"/><ellipse cx="2505" cy="868" rx="26" ry="24" fill="#00e000" shape-rendering="auto"/><rect x="2414" y="868" width="108" height="8" fill="#00ffff"/><rect x="2488" y="875" width="34" height="9" fill="#00ffff"/><g transform="translate(941 949)" shape-rendering="auto"><rect x="1" y="0" width="90" height="34" rx="14" fill="#ffff00"/><rect x="56" y="2" width="34" height="30" rx="12" fill="#ffff80"/><rect x="16" y="4" width="10" height="26" fill="#000"/><rect x="52" y="4" width="10" height="26" fill="#000"/><rect x="26" y="6" width="26" height="22" fill="#ffff00"/></g><rect x="941" y="985" width="90" height="11" fill="#00ffff"/><g transform="translate(2414 881) translate(91 0) scale(-1 1)" shape-rendering="auto"><rect x="1" y="0" width="90" height="34" rx="14" fill="#ffff00"/><rect x="56" y="2" width="34" height="30" rx="12" fill="#ffff80"/><rect x="16" y="4" width="10" height="26" fill="#000"/><rect x="52" y="4" width="10" height="26" fill="#000"/><rect x="26" y="6" width="26" height="22" fill="#ffff00"/></g></g></svg>
<div class="a" style="left:238px;top:155px;width:47px;height:145px;background:#d4d0c8"></div>
<div class="a" style="left:238px;top:155px;width:47px;height:3px;background:#000"></div>
<div class="a" style="left:238px;top:158px;width:2px;height:142px;background:#fff"></div>
<div class="a" style="left:283px;top:130px;width:2px;height:170px;background:#000"></div>
<div class="a" style="left:238px;top:203px;width:47px;height:2px;background:#000"></div>
<div class="a" style="left:238px;top:252px;width:47px;height:2px;background:#000"></div>
<div class="a" style="left:238px;top:298px;width:47px;height:2px;background:#000"></div>
<div class="a" style="left:240px;top:205px;width:43px;height:47px;box-shadow:inset 2px 2px 0 #fff,inset -2px -2px 0 #85827d"></div>
<div class="a" style="left:240px;top:254px;width:43px;height:44px;box-shadow:inset 2px 2px 0 #fff,inset -2px -2px 0 #85827d"></div>
<svg class="a" style="left:248px;top:167px" width="28" height="28" viewBox="0 0 28 28" shape-rendering="crispEdges"><rect x="0" y="0" width="28" height="28" fill="#000"/><rect x="2" y="2" width="3" height="24" fill="#6e6e00"/><rect x="23" y="14" width="3" height="12" fill="#6e6e00"/><rect x="5" y="2" width="18" height="13" fill="#0030ff"/><rect x="8" y="3" width="12" height="5" fill="#00ffff"/><rect x="6" y="10" width="2" height="2" fill="#ff0"/><rect x="20" y="10" width="2" height="2" fill="#ff0"/><rect x="10" y="10" width="8" height="2" fill="#888"/><rect x="2" y="15" width="24" height="2" fill="#6e6e00"/><rect x="18" y="19" width="4" height="7" fill="#ccc"/><rect x="24" y="3" width="2" height="2" fill="#fff"/></svg>
<svg class="a" style="left:249px;top:214px" width="30" height="30" viewBox="0 0 30 30" shape-rendering="crispEdges"><rect x="1" y="1" width="26" height="27" fill="none" stroke="#fff" stroke-width="2"/><rect x="0" y="0" width="26" height="27" fill="none" stroke="#bab6ae" stroke-width="2"/><rect x="6" y="2" width="14" height="11" fill="none" stroke="#fff" stroke-width="2"/><rect x="5" y="17" width="16" height="9" fill="#bab6ae"/></svg>
<svg class="a" style="left:249px;top:262px" width="30" height="30" viewBox="0 0 30 30" shape-rendering="crispEdges"><rect x="1" y="1" width="26" height="27" fill="none" stroke="#fff" stroke-width="2"/><rect x="0" y="0" width="26" height="27" fill="none" stroke="#bab6ae" stroke-width="2"/><rect x="6" y="2" width="14" height="11" fill="none" stroke="#fff" stroke-width="2"/><rect x="5" y="17" width="16" height="9" fill="#bab6ae"/></svg>
<svg class="a" style="left:0;top:0" width="700" height="400" viewBox="0 0 700 400"><circle cx="261" cy="182" r="33" fill="none" stroke="#e8412a" stroke-width="10"/><path d="M399 305 L330 241" stroke="#e8412a" stroke-width="11"/><polygon points="296,213 350,229 316,264" fill="#e8412a"/></svg>
</body></html>
